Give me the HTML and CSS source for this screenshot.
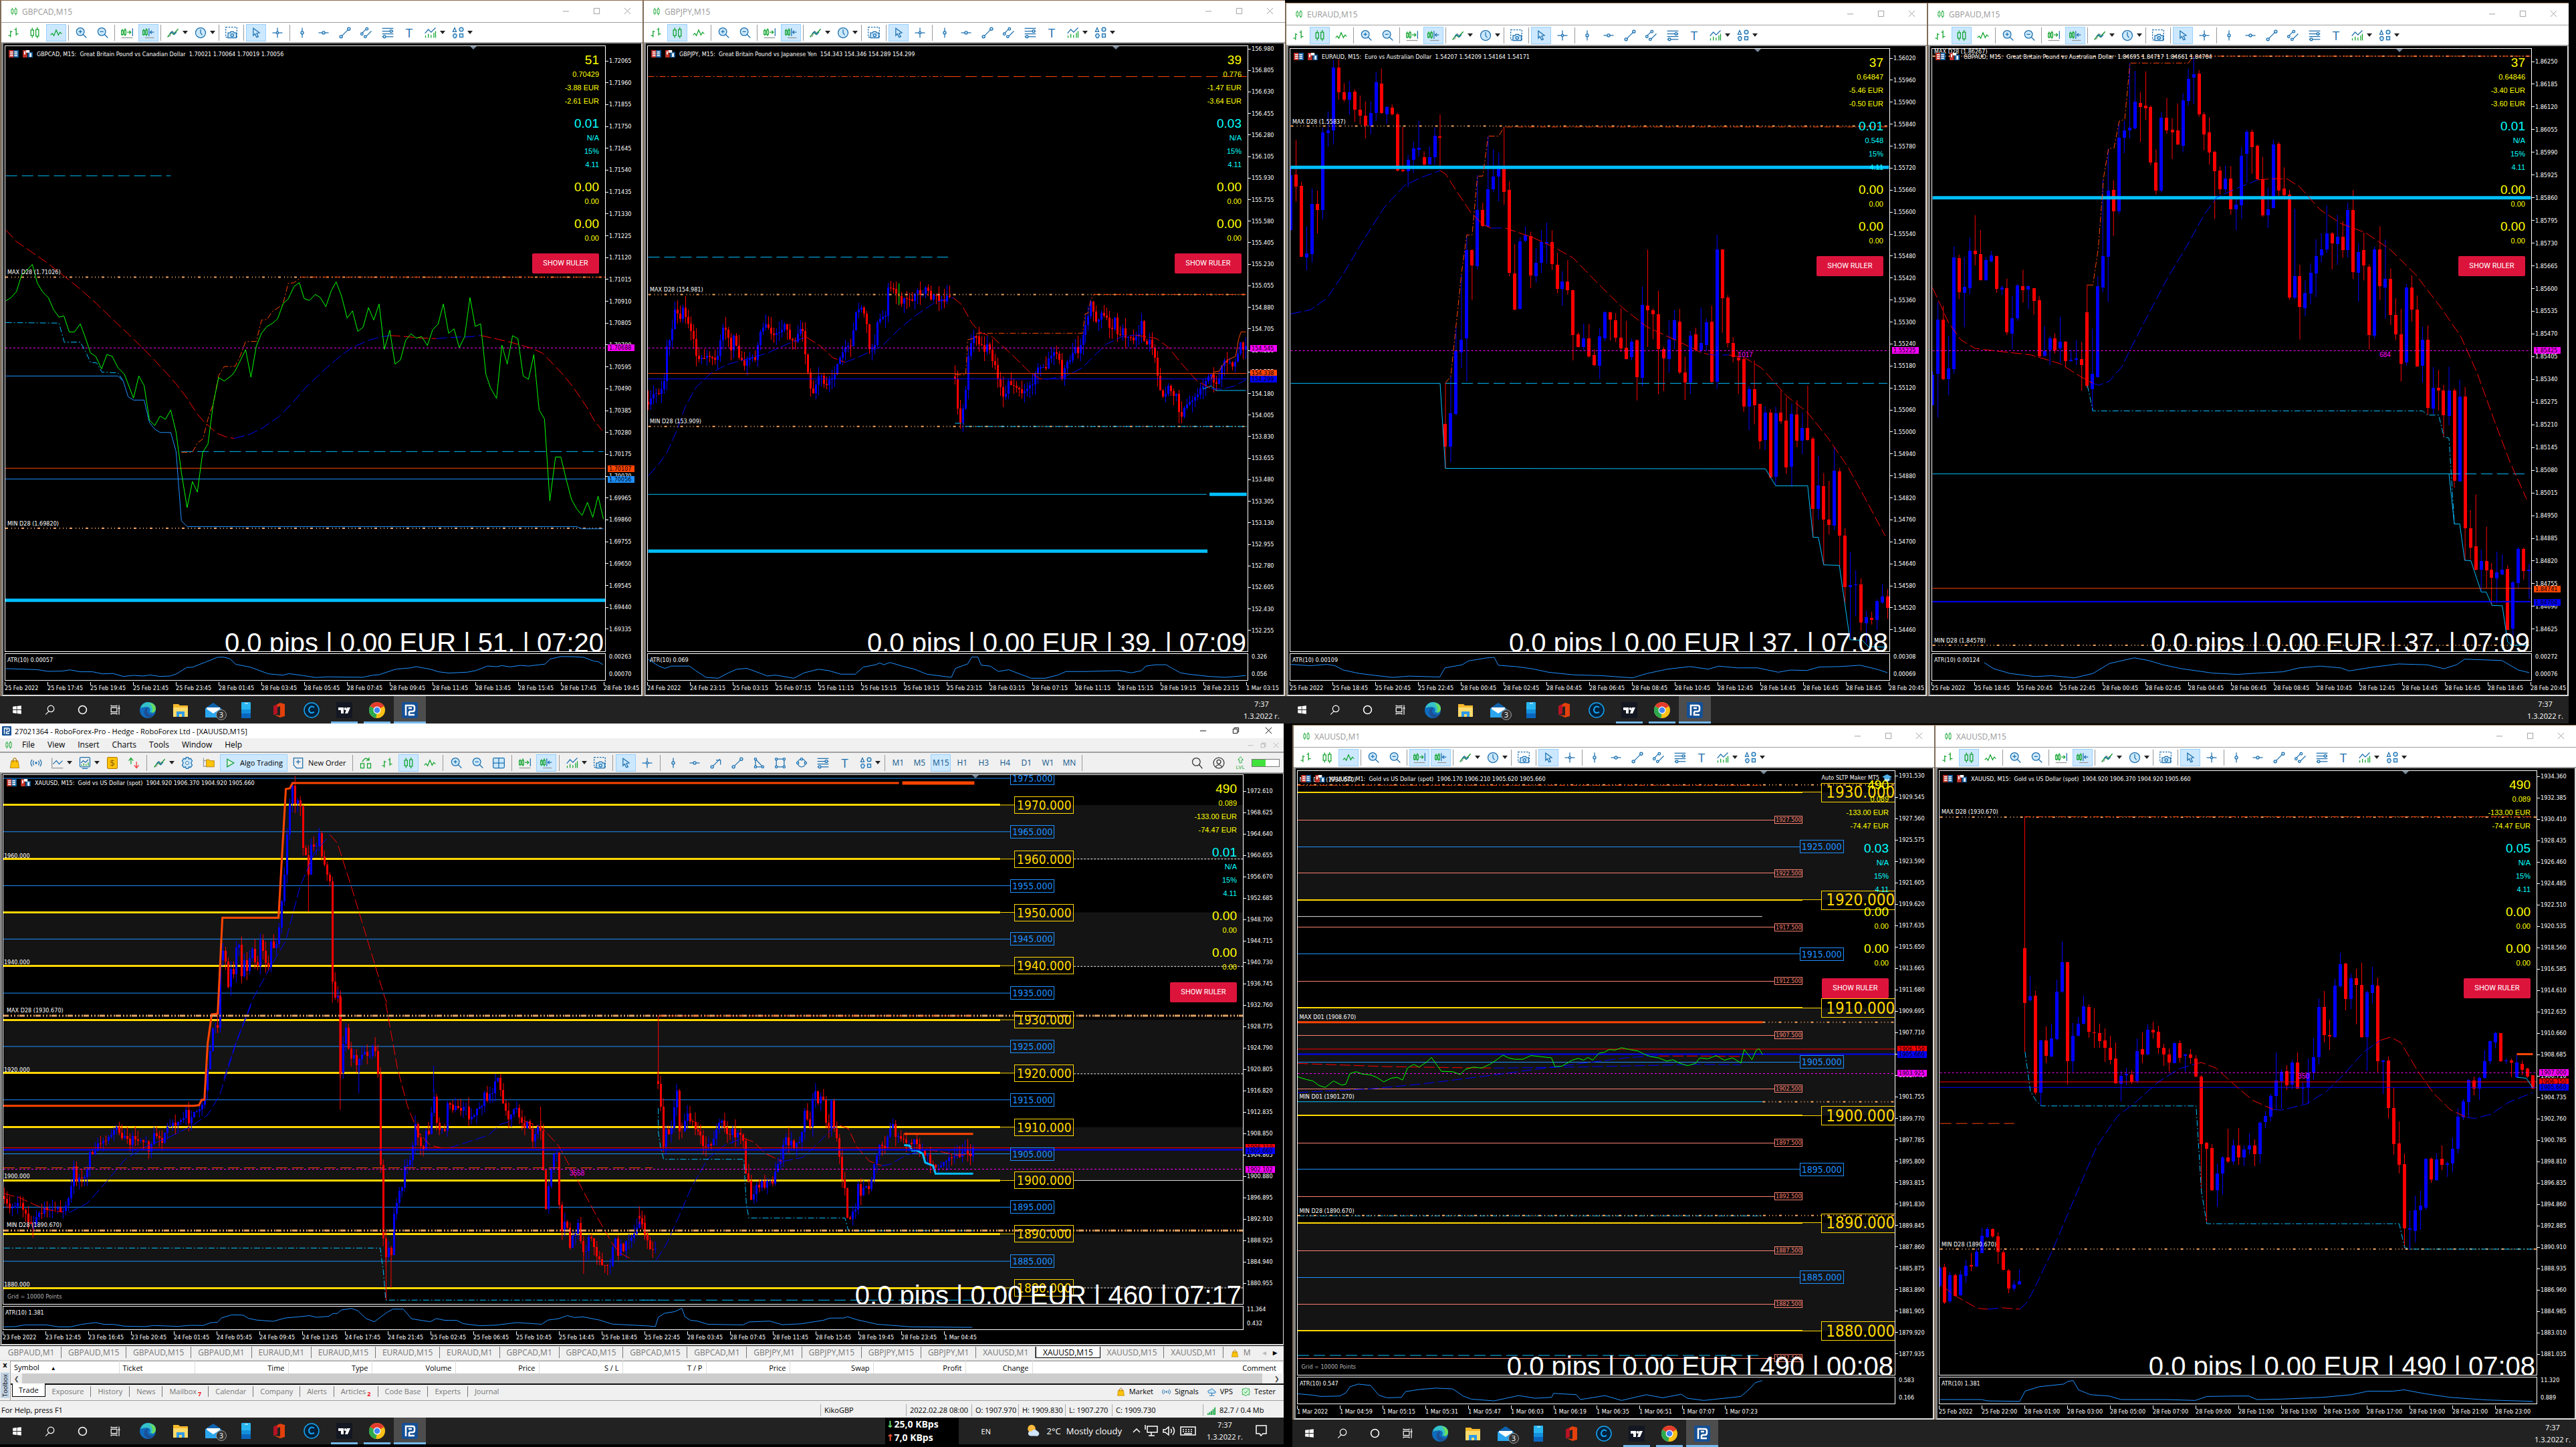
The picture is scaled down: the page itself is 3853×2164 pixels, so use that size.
FILE: index.html
```html
<!DOCTYPE html>
<html lang="en">
<head>
    <meta charset="UTF-8">
    <meta name="viewport" content="width=device-width, initial-scale=1.0">
    <title>Trading Desktop</title>
    <link rel="stylesheet" href="styles.css">
</head>
<body>
    <svg class="sprite" aria-hidden="true">
        <symbol id="i-bars" viewBox="0 0 24 24"><path class="g" d="M3 17h4M7 8v12M7 10h3M17 3v14M14 6h3M17 14h4"/></symbol>
        <symbol id="i-candles" viewBox="0 0 24 24"><path class="g" d="M5 7h5v10H5zM14 6h5v12h-5zM7.500 3v4M7.500 17v4M16.500 2v4M16.500 18v4"/></symbol>
        <symbol id="i-line" viewBox="0 0 24 24"><path class="g" d="M2 16l3-3 3 4 4-10 4 9 3-5 3 3"/></symbol>
        <symbol id="i-zoomin" viewBox="0 0 24 24"><circle class="bf" cx="11" cy="10" r="7"/><path class="b" d="M16 15l6 6M8 10h6M11 7v6"/></symbol>
        <symbol id="i-zoomout" viewBox="0 0 24 24"><circle class="bf" cx="11" cy="10" r="7"/><path class="b" d="M16 15l6 6M8 10h6"/></symbol>
        <symbol id="i-scroll" viewBox="0 0 24 24"><path class="g" d="M2 8h3v7H2zM7 7h3v8H7zM3.500 5v3M8.500 4v3M3.500 15v2M8.500 15v3M12 11h7M16 8l3 3-3 3"/><path class="b" d="M22 4v14"/><path class="n" d="M2 21h20"/></symbol>
        <symbol id="i-shift" viewBox="0 0 24 24"><path class="g" d="M2 8h3v7H2zM7 7h3v8H7zM3.500 5v3M8.500 4v3M3.500 15v2M8.500 15v3"/><path class="b" d="M13 4v14M22 11h-7M18 8l-3 3 3 3"/><path class="n" d="M6 21h16"/></symbol>
        <symbol id="i-ind" viewBox="0 0 24 24"><path class="n" d="M2 18h4l4-9 4 3 7-6"/><path class="g" d="M2 20l6-9 5 4 8-10"/><path class="b" d="M6 14l4-4 4 5 4-4"/></symbol>
        <symbol id="i-clock" viewBox="0 0 24 24"><circle class="bf" cx="12" cy="12" r="9"/><path class="b" d="M12 6v6l3 4"/></symbol>
        <symbol id="i-camera" viewBox="0 0 24 24"><path class="b dash" d="M2 2h20v18H2z"/><path class="bf" d="M6 12h4l1-2h5l1 2h4v9H6z"/><circle class="b" cx="13.500" cy="16.500" r="2.500"/></symbol>
        <symbol id="i-cursor" viewBox="0 0 24 24"><path class="bf" d="M7 4l11 8-5 1 3 6-3 1-3-6-3 3z"/></symbol>
        <symbol id="i-cross" viewBox="0 0 24 24"><path class="b" d="M12 3v18M3 12h18"/><circle class="bf" cx="12" cy="12" r="2"/></symbol>
        <symbol id="i-vline" viewBox="0 0 24 24"><path class="b" d="M12 3v18"/><circle class="bf" cx="12" cy="12" r="2.500"/></symbol>
        <symbol id="i-hline" viewBox="0 0 24 24"><path class="b" d="M3 12h18"/><circle class="bf" cx="12" cy="12" r="2.500"/></symbol>
        <symbol id="i-trend" viewBox="0 0 24 24"><path class="b" d="M5 19L19 5"/><circle class="bf" cx="5" cy="19" r="2.500"/><circle class="bf" cx="19" cy="5" r="2.500"/></symbol>
        <symbol id="i-arrow" viewBox="0 0 24 24"><path class="b" d="M5 19L19 5M12 7h8v8"/><circle class="bf" cx="5" cy="19" r="2.500"/></symbol>
        <symbol id="i-channel" viewBox="0 0 24 24"><path class="b" d="M3 14L12 5M10 20L21 9"/><circle class="bf" cx="4" cy="14" r="2.200"/><circle class="bf" cx="13" cy="5" r="2.200"/><circle class="bf" cx="10" cy="19" r="2.200"/></symbol>
        <symbol id="i-fib" viewBox="0 0 24 24"><path class="b" d="M2 4h20M2 9h20M2 14h20M2 19h20"/><circle class="bf" cx="18" cy="9" r="2.300"/><circle class="bf" cx="6" cy="19" r="2.300"/></symbol>
        <symbol id="i-chart" viewBox="0 0 24 24"><path class="b" d="M2 13l6-7 5 5 8-8"/><path class="g" d="M3 21v-4M8 21v-7M13 21v-5M18 21v-9M21 21V9"/></symbol>
        <symbol id="i-shapes" viewBox="0 0 24 24"><path class="b" d="M3 10l3-7 3 7z"/><circle class="bf" cx="18" cy="6" r="3.500"/><path class="bf" d="M3 17l2-3h3l2 3-2 4H5z"/><path class="bf" d="M15 14h6v6h-6z"/></symbol>
        <symbol id="i-tri" viewBox="0 0 24 24"><path class="b" d="M6 5v14h13z"/><circle class="bf" cx="6" cy="5" r="2"/><circle class="bf" cx="6" cy="19" r="2"/><circle class="bf" cx="19" cy="19" r="2"/></symbol>
        <symbol id="i-rect" viewBox="0 0 24 24"><path class="b" d="M5 5h14v14H5z"/><circle class="bf" cx="5" cy="5" r="2"/><circle class="bf" cx="19" cy="5" r="2"/><circle class="bf" cx="5" cy="19" r="2"/><circle class="bf" cx="19" cy="19" r="2"/></symbol>
        <symbol id="i-ellipse" viewBox="0 0 24 24"><circle class="b" cx="12" cy="12" r="7"/><circle class="bf" cx="12" cy="5" r="2"/><circle class="bf" cx="5" cy="12" r="2"/><circle class="bf" cx="19" cy="12" r="2"/></symbol>
        <symbol id="i-bag" viewBox="0 0 24 24"><path d="M6 8h12l2 13H4z" fill="#fcc30b" stroke="#b37a00"/><path d="M9 11V6q3-6 6 0v5" fill="none" stroke="#b37a00" stroke-width="1.500"/></symbol>
        <symbol id="i-signal" viewBox="0 0 24 24"><circle cx="12" cy="12" r="2" fill="#1c6fae"/><path class="b" d="M8 8q-3 4 0 8M16 8q3 4 0 8M5 6q-5 6 0 12M19 6q5 6 0 12"/></symbol>
        <symbol id="i-axes" viewBox="0 0 24 24"><path class="n" d="M2 3v18h20"/><path class="b" d="M4 14l6-6 5 6 6-6"/></symbol>
        <symbol id="i-panel" viewBox="0 0 24 24"><rect class="b" x="3" y="2" width="18" height="17" rx="2"/><path class="b" d="M5 12l4-4 4 3 5-5M7 22h10"/><path class="g" d="M6 17v-2M10 17v-4M14 17v-3M18 17v-6"/></symbol>
        <symbol id="i-swap" viewBox="0 0 24 24"><path class="g" d="M7 14V4M3 8l4-5 4 5"/><path d="M17 10v10M13 16l4 5 4-5" fill="none" stroke="#e33" stroke-width="1.500"/></symbol>
        <symbol id="i-gear" viewBox="0 0 24 24"><path class="bf" d="M10 2h4l1 3 3-1 3 4-2 4 2 4-3 4-3-1-1 3h-4l-1-3-3 1-3-4 2-4-2-4 3-4 3 1z"/><circle cx="12" cy="12" r="3" fill="#f0f0f0" stroke="#1c6fae"/></symbol>
        <symbol id="i-folder" viewBox="0 0 24 24"><path class="n" d="M3 3v15h6M3 8h6"/><path d="M8 6h5l1 2h8v11H8z" fill="#fcc30b" stroke="#b37a00"/></symbol>
        <symbol id="i-play" viewBox="0 0 24 24"><path d="M7 5l12 7-12 7z" fill="#dff5e3" stroke="#0f9d3a" stroke-width="1.500"/></symbol>
        <symbol id="i-order" viewBox="0 0 24 24"><path class="b" d="M4 3h16v18H9l-5-5zM8 10h8M12 6v8"/></symbol>
        <symbol id="i-refresh" viewBox="0 0 24 24"><path class="g" d="M3 13h6v8H3zM15 13h6v8h-6zM6 10q6-11 12-3M18 2v5h-5"/></symbol>
        <symbol id="i-grid" viewBox="0 0 24 24"><rect class="bf" x="2" y="3" width="20" height="18" rx="2"/><path class="b" d="M12 3v18M2 12h20"/></symbol>
        <symbol id="i-search" viewBox="0 0 24 24"><circle class="k" cx="10" cy="10" r="7"/><path class="k" d="M15 15l6 7"/></symbol>
        <symbol id="i-user" viewBox="0 0 24 24"><circle class="k" cx="12" cy="12" r="9.500"/><circle class="k" cx="12" cy="10" r="3.500"/><path class="k" d="M6 19q6-8 12 0"/></symbol>
        <symbol id="i-lvl" viewBox="0 0 24 24"><path class="g" d="M9 20v-8H5l7-9 7 9h-4v8z"/></symbol>
        <symbol id="i-cloud" viewBox="0 0 24 24"><path class="bf" d="M6 15q-4-1-3-5 2-3 5-2 3-6 8-1l1 2q5 1 4 5l-3 1z"/><path class="b" d="M12 15v6M6 21h12"/></symbol>
        <symbol id="i-check" viewBox="0 0 24 24"><path d="M12 2l3 3h5v5l2 2-2 2v5h-5l-3 3-3-3H4v-5l-2-2 2-2V5h5z" fill="#d7f7dd" stroke="#17a63c" stroke-width="1.500"/><path class="g" d="M8 12l3 3 5-6"/></symbol>
        <symbol id="i-robo" viewBox="0 0 24 24"><rect width="24" height="24" rx="2" fill="#155096"/><path d="M6 20V5h10q3 0 3 3v3q0 3-3 3h-5M10 9h5M11 14v5h8" fill="none" stroke="#fff" stroke-width="2.500"/></symbol>
        <symbol id="t-win" viewBox="0 0 24 24"><path d="M4 6l7-1v6.500H4zM12 5l8-1v7.500h-8zM4 12.500h7V19l-7-1zM12 12.500h8V20l-8-1z" fill="#fff"/></symbol>
        <symbol id="t-search" viewBox="0 0 24 24"><circle class="w" cx="14" cy="10" r="6"/><path class="w" d="M10 15l-6 6"/></symbol>
        <symbol id="t-ring" viewBox="0 0 24 24"><circle cx="12" cy="12" r="7.500" fill="none" stroke="#fff" stroke-width="2"/></symbol>
        <symbol id="t-view" viewBox="0 0 24 24"><path class="w" d="M4 8h11v8H4zM4 3v2h11V3M4 21v-2h11v2M19 3v18M17 9h4"/></symbol>
        <symbol id="t-edge" viewBox="0 0 24 24"><circle cx="12" cy="12" r="12" fill="#0f6cbd"/><path d="M1 9Q4 0 13 0q11 1 11 10-1 7-9 5 3-7-4-8-6 0-10 2z" fill="#35c1c8"/><path d="M14 1q10 2 10 9-1 6-6 6 4-8-4-15z" fill="#6bdc5a"/><path d="M7 13q1-5 6-4-5 5 1 9 4 2 8 0-4 6-10 5-7-3-5-10z" fill="#1c4f96"/></symbol>
        <symbol id="t-folder" viewBox="0 0 24 24"><path d="M1 3h8l2 2h12v17H1z" fill="#f7b92b"/><path d="M1 8h22v14H1z" fill="#fddb6c"/><path d="M6 22v-8h12v8h-4v-4h-4v4z" fill="#2f9ae6"/></symbol>
        <symbol id="t-mail" viewBox="0 0 24 24"><path d="M0 9l12-8 12 8v14H0z" fill="#0e63ae"/><path d="M2 8h20v9H2z" fill="#fff"/><path d="M0 9l12 8 12-8v14H0z" fill="#2aa5ee"/></symbol>
        <symbol id="t-phone" viewBox="0 0 24 24"><rect x="5" y="0" width="14" height="24" rx="1" fill="#29b6f0"/><path d="M5 11h14v6H5z" fill="#138fdc"/><path d="M5 17h14v7H5z" fill="#0a66bd"/><path d="M10 2h5" stroke="#fff"/></symbol>
        <symbol id="t-office" viewBox="0 0 24 24"><path d="M4 6l10-5 7 2v18l-7 2-9-4 9 1V6L9 8v9l-5 2z" fill="#e3400c"/><path d="M4 6l6-3v14l-6 2z" fill="#b81224"/></symbol>
        <symbol id="t-c" viewBox="0 0 24 24"><circle cx="12" cy="12" r="11" fill="#03203a" stroke="#16a3f2" stroke-width="1.500"/><path d="M16 8q-6-4-8 3 0 7 8 4" fill="none" stroke="#16a3f2" stroke-width="2"/></symbol>
        <symbol id="t-tv" viewBox="0 0 24 24"><path d="M0 0h24v24H0z" fill="#131722"/><path d="M3 8h8v9H7v-5H3zM16 8h5l-4 9h-4z" fill="#fff"/><circle cx="13.500" cy="10" r="2" fill="#fff"/></symbol>
        <symbol id="t-chrome" viewBox="0 0 24 24"><circle cx="12" cy="12" r="12" fill="#fbc116"/><path d="M12 12L1.500 6Q5 0 12 0q7 0 10.500 6z" fill="#e33b2e"/><path d="M12 12L1.500 6q-3.500 7 0 12 3 5 9 6z" fill="#2da94f"/><circle cx="12" cy="12" r="5.500" fill="#fff"/><circle cx="12" cy="12" r="4.300" fill="#4285f4"/></symbol>
        <symbol id="h-list" viewBox="0 0 16 12"><path d="M0 0h8v12H0z" fill="#c3342b"/><path d="M8 0h8v12H8z" fill="#1b64a5"/><path d="M2 3h5M2 6h5M2 9h5M9 3h5M9 6h5M9 9h5" stroke="#fff" stroke-width="1.500"/></symbol>
        <symbol id="h-tags" viewBox="0 0 16 12"><path d="M0 0h7v12H0z" fill="#c3342b"/><path d="M8 3h8v9H8z" fill="#1b64a5"/><path d="M2 2h2v5H2zM5 0h6v4H5zM11 5h3v6h-3z" fill="#fff"/></symbol>
        <symbol id="h-hat" viewBox="0 0 16 12"><path d="M0 4l8-4 8 4-8 4z" fill="#4fb0ea"/><path d="M4 6v4q4 3 8 0V6L8 8zM14 5v5" fill="#cfe9fa" stroke="#4fb0ea"/></symbol>
        <symbol id="s-min" viewBox="0 0 12 12"><path d="M1 6.500h10" stroke="currentColor"/></symbol>
        <symbol id="s-max" viewBox="0 0 12 12"><path d="M1.500 1.500h9v9h-9z" fill="none" stroke="currentColor"/></symbol>
        <symbol id="s-restore" viewBox="0 0 12 12"><path d="M1.500 3.500h7v7h-7zM3.500 3V1.500h7v7H9" fill="none" stroke="currentColor"/></symbol>
        <symbol id="s-close" viewBox="0 0 12 12"><path d="M1 1l10 10M11 1L1 11" stroke="currentColor"/></symbol>
    </svg>

    <main class="desktop">
        <section class="monitor">
            <div class="windows">
                <article class="window" data-chart="gbpcad"></article>
                <article class="window" data-chart="gbpjpy"></article>
            </div>
            <footer class="taskbar"><div class="clock"><span>7:37</span><span>1.3.2022 г.</span></div></footer>
        </section>
        <section class="monitor right-top">
            <div class="windows">
                <article class="window" data-chart="euraud"></article>
                <article class="window" data-chart="gbpaud"></article>
            </div>
            <footer class="taskbar"><div class="clock"><span>7:37</span><span>1.3.2022 г.</span></div></footer>
        </section>
        <section class="monitor left-bottom">
            <article class="terminal">
                <header class="titlebar dark">
                    <svg class="app-icon"><use href="#i-robo"/></svg>
                    <h1>27021364 - RoboForex-Pro - Hedge - RoboForex Ltd - [XAUUSD,M15]</h1>
                    <div class="win-buttons">
                        <button aria-label="Minimize"><svg><use href="#s-min"/></svg></button>
                        <button aria-label="Restore"><svg><use href="#s-restore"/></svg></button>
                        <button aria-label="Close"><svg><use href="#s-close"/></svg></button>
                    </div>
                </header>
                <nav class="menu">
                    <svg class="app-icon"><use href="#i-candles"/></svg>
                    <button>File</button><button>View</button><button>Insert</button><button>Charts</button><button>Tools</button><button>Window</button><button>Help</button>
                    <div class="child-buttons">
                        <button aria-label="Minimize chart"><svg><use href="#s-min"/></svg></button>
                        <button aria-label="Restore chart"><svg><use href="#s-restore"/></svg></button>
                        <button aria-label="Close chart"><svg><use href="#s-close"/></svg></button>
                    </div>
                </nav>
                <div class="toolbar main-tools" id="main-tools"></div>
                <div class="chart" data-plot="xauusd15"></div>
                <nav class="chart-tabs">
                    <button>GBPAUD,M1</button><button>GBPAUD,M15</button><button>GBPAUD,M15</button><button>GBPAUD,M1</button><button>EURAUD,M1</button><button>EURAUD,M15</button><button>EURAUD,M15</button><button>EURAUD,M1</button><button>GBPCAD,M1</button><button>GBPCAD,M15</button><button>GBPCAD,M15</button><button>GBPCAD,M1</button><button>GBPJPY,M1</button><button>GBPJPY,M15</button><button>GBPJPY,M15</button><button>GBPJPY,M1</button><button>XAUUSD,M1</button><button class="active">XAUUSD,M15</button><button>XAUUSD,M15</button><button>XAUUSD,M1</button>
                    <button class="market"><svg><use href="#i-bag"/></svg>M</button>
                    <span class="pager"><i>◂</i><b>▸</b></span>
                </nav>
                <section class="toolbox">
                    <div class="toolbox-side"><button aria-label="Close toolbox">x</button><span>Toolbox</span></div>
                    <div class="toolbox-body">
                        <table>
                            <colgroup><col class="w-l"><col class="w-m"><col class="w-time"><col class="w-n"><col class="w-n"><col class="w-n"><col class="w-n"><col class="w-n"><col class="w-n"><col class="w-n"><col class="w-profit"><col class="w-s"><col></colgroup>
                            <thead><tr><th class="start">Symbol <small>▲</small></th><th class="start">Ticket</th><th>Time</th><th>Type</th><th>Volume</th><th>Price</th><th>S / L</th><th>T / P</th><th>Price</th><th>Swap</th><th>Profit</th><th>Change</th><th>Comment</th></tr></thead>
                        </table>
                        <div class="scroll"><button aria-label="Scroll left">❮</button><div></div><button aria-label="Scroll right">❯</button></div>
                        <div class="box-tabs">
                            <button class="active">Trade</button><button>Exposure</button><button>History</button><button>News</button><button>Mailbox<sub>7</sub></button><button>Calendar</button><button>Company</button><button>Alerts</button><button>Articles<sub>2</sub></button><button>Code Base</button><button>Experts</button><button>Journal</button>
                            <div class="services">
                                <button><svg><use href="#i-bag"/></svg>Market</button>
                                <button><svg><use href="#i-signal"/></svg>Signals</button>
                                <button><svg><use href="#i-cloud"/></svg>VPS</button>
                                <button><svg><use href="#i-check"/></svg>Tester</button>
                            </div>
                        </div>
                    </div>
                </section>
                <div class="status">
                    <span class="help">For Help, press F1</span>
                    <span class="s-acc">KikoGBP</span><span class="s-time">2022.02.28 08:00</span><span>O: 1907.970</span><span>H: 1909.830</span><span>L: 1907.270</span><span>C: 1909.730</span><span class="s-gap"></span>
                    <span class="s-net"><svg viewBox="0 0 14 14"><path d="M1 14v-3M4 14v-5M7 14V7M10 14V4M13 14V1" stroke="#0ba53a" stroke-width="2"/></svg>82.7 / 0.4 Mb</span>
                </div>
            </article>
            <footer class="taskbar full">
                <div class="speed"><span><i class="rx">↓</i>25,0 KBps</span><span><i class="tx">↑</i>7,0 KBps</span></div>
                <span class="lang">EN</span>
                <svg class="weather" viewBox="0 0 24 24"><circle cx="9" cy="8" r="7" fill="#f9b93a"/><path d="M7 21q-5-1-4-6 2-4 6-2 4-7 10-1 5 3 3 7-2 3-5 2z" fill="#cfe4fa"/></svg>
                <span class="temp">2°C</span><span class="sky">Mostly cloudy</span>
                <svg class="tray" viewBox="0 0 110 20"><path class="w" d="M3 12l5-5 5 5M24 3h15v9H24zM30 12v5M26 17h9M21 1v7M48 8h3l5-4v12l-5-4h-3zM59 7q3 3 0 6M62 4q5 6 0 12M74 4h22v12H74zM77 8h2M81 8h2M85 8h2M89 8h2M77 11h2M81 11h2M85 11h2M89 11h2M79 14h12"/></svg>
                <div class="clock"><span>7:37</span><span>1.3.2022 г.</span></div>
                <svg class="notify" viewBox="0 0 18 18"><path class="w" d="M1 1h15v12H11l-3 3-2-3H1z"/></svg>
            </footer>
        </section>
        <section class="monitor right-bottom">
            <div class="windows">
                <article class="window" data-chart="xauusd1"></article>
                <article class="window" data-chart="xauusd15b"></article>
            </div>
            <footer class="taskbar"><div class="clock"><span>7:37</span><span>1.3.2022 г.</span></div></footer>
        </section>
    </main>

    <script src="data.js"></script>
    <script src="app.js"></script>
</body>
</html>
```
FILE: styles.css
```css
* {
    box-sizing: border-box;
}
body {
    margin: 0;
    background: #000;
    color: #000;
    font-family: "Open Sans", "Noto Sans", sans-serif;
    font-size: 11px;
}
button {
    margin: 0;
    padding: 0;
    border: 0;
    background: none;
    color: inherit;
    font: inherit;
    white-space: nowrap;
}
.sprite {
    position: absolute;
    width: 0;
    height: 0;
}
.g, .b, .n, .k, .w {
    fill: none;
    stroke-width: 1.5;
}
.g { stroke: #0fa32c; }
.b { stroke: #1c6fae; }
.n { stroke: #999; }
.k { stroke: #333; }
.w { stroke: #fff; }
.bf {
    fill: #cbe8fb;
    stroke: #1c6fae;
    stroke-width: 1.5;
}
.dash {
    stroke-dasharray: 3 2;
}

/* monitors */
.desktop {
    display: grid;
    grid-template-columns: 1922fr 1931fr;
    grid-template-rows: minmax(0, 1fr) minmax(0, 1fr);
    height: 100vh;
    min-width: 1600px;
}
.monitor {
    display: flex;
    flex-direction: column;
    min-width: 0;
    min-height: 0;
}
.right-top {
    padding: 4px 11px 0 0;
}
.left-bottom {
    padding: 0 2px 4px 0;
}
.right-bottom {
    padding: 2px 0 0 11px;
}
.windows {
    flex: 1;
    display: grid;
    grid-template-columns: minmax(0, 1fr) minmax(0, 1fr);
    min-height: 0;
}
.window {
    display: flex;
    flex-direction: column;
    min-width: 0;
    min-height: 0;
    background: #fff;
    border-top: 1px solid #8d6c48;
    border-left: 2px solid #806c58;
}

/* title bars */
.titlebar {
    display: flex;
    align-items: center;
    height: 33px;
    background: #fff;
    color: #999;
    border-bottom: 1px solid #a0a0a0;
}
.titlebar h1, .titlebar h2 {
    margin: 0;
    font-size: 12px;
    font-weight: 400;
    flex: 1;
}
.app-icon {
    width: 14px;
    height: 14px;
    margin: 0 5px 0 12px;
}
.win-buttons button {
    width: 46px;
    height: 30px;
}
.win-buttons svg {
    width: 11px;
    height: 11px;
}
.titlebar.dark {
    height: 22px;
    color: #000;
    border-bottom: 0;
}
.dark .app-icon {
    margin: 0 5px 0 3px;
}
.dark .win-buttons button {
    height: 20px;
}
.dark h1 {
    font-size: 11px;
}

/* toolbars */
.toolbar {
    display: flex;
    align-items: center;
    gap: 2px;
    height: 31px;
    padding-left: 3px;
    background: #fff;
    border-bottom: 2px solid #a0a0a0;
}
.tool {
    display: flex;
    align-items: center;
    justify-content: center;
    width: 30px;
    height: 26px;
}
.tool svg {
    width: 20px;
    height: 20px;
}
.tool.drop {
    width: 39px;
    justify-content: flex-start;
    padding-left: 5px;
    gap: 4px;
}
.tool.drop::after {
    content: "";
    border: 4px solid transparent;
    border-top: 5px solid #222;
    border-bottom: 0;
}
.tool.active {
    background: #cce8ff;
    border: 1px solid #99d1ff;
}
.tool.text {
    width: auto;
    padding: 0 6px 0 4px;
    gap: 5px;
    font-size: 11px;
}
.letter {
    color: #1c6fae;
    font-size: 19px;
    line-height: 20px;
}
.sep {
    width: 1px;
    height: 24px;
    margin: 0 1px;
    background: #999;
}
.main-tools .sep {
    margin: 0 2px;
}
.tool.period {
    color: #14578a;
    font-size: 12px;
}
.coin {
    width: 16px;
    height: 18px;
    border-radius: 2px;
    border: 1px solid #b37a00;
    background: #fcc30b;
    color: #905c00;
    font-size: 13px;
    line-height: 16px;
    text-align: center;
}
.lvl {
    flex-direction: column;
    color: #0fa32c;
    font-size: 8px;
    line-height: 8px;
}
.tool.lvl svg {
    width: 13px;
    height: 13px;
}
.push {
    margin-left: auto;
}
.battery {
    width: 42px;
    height: 12px;
    margin: 0 6px 0 0;
    border: 1px solid #777;
    background: linear-gradient(90deg, #41e23c 50%, #fff 50%);
}

/* charts */
.chart {
    flex: 1;
    min-height: 0;
    display: grid;
    grid-template-columns: minmax(0, 1fr) 53px;
    grid-template-rows: minmax(0, 1fr) 41px 19px;
    row-gap: 2px;
    padding: 3px 0 0 2px;
    background: #000;
    border: solid #ddd;
    border-width: 0 2px 2px 0;
    border-left: 3px solid #888;
    color: #fff;
    font-family: "DejaVu Sans Condensed", "DejaVu Sans", sans-serif;
    font-size: 9px;
    line-height: 10px;
    overflow: hidden;
}
.chart.wide {
    grid-template-columns: minmax(0, 1fr) 56px;
}
.plot, .atr {
    position: relative;
    overflow: hidden;
    border: 1px solid #fff;
}
.plot > svg, .atr > svg {
    position: absolute;
    top: 0;
    left: 0;
    width: 100%;
    height: 100%;
}
.atr span {
    position: absolute;
    left: 3px;
    top: 4px;
}
.price-axis, .atr-axis {
    display: flex;
    flex-direction: column;
    justify-content: space-between;
    position: relative;
}
.atr-axis {
    padding: 0 0 5px 5px;
}
.price-axis > span {
    display: flex;
    align-items: center;
    gap: 1px;
}
.price-axis > span::before {
    content: "";
    width: 4px;
    height: 1px;
    background: #fff;
}
.price-tag {
    position: absolute;
    left: 3px;
    width: 40px;
    height: 10px;
    margin-top: -5px;
    padding-left: 2px;
    color: #000;
}
.wide .price-tag {
    width: 44px;
}
.time-axis {
    grid-column: 1 / -1;
    display: flex;
    overflow: hidden;
}
.time-axis span {
    flex: none;
    width: 64px;
    padding-top: 4px;
    white-space: nowrap;
    background: linear-gradient(#fff, #fff) 0 0 / 1px 5px no-repeat;
}
.chart-head {
    position: absolute;
    left: 5px;
    top: 6px;
    display: flex;
    align-items: center;
    gap: 6px;
    white-space: pre;
}
.chart-head svg, .expert svg {
    width: 15px;
    height: 11px;
}
.expert {
    position: absolute;
    right: 4px;
    top: 5px;
    display: flex;
    gap: 4px;
}
.shift-mark {
    position: absolute;
    top: 0;
    margin-left: -5px;
    border: 5px solid transparent;
    border-top-color: #778899;
    border-bottom: 0;
}
.note {
    position: absolute;
    margin-top: -5px;
    white-space: nowrap;
}
.note.dim {
    color: #b0b0b0;
}
.note.count {
    color: #ff00ff;
    font-family: "Liberation Sans", Arial, sans-serif;
    font-size: 10px;
}
.tag {
    position: absolute;
    display: flex;
    align-items: center;
    justify-content: center;
    border: 1px solid;
}
.tag.gold {
    width: 89px;
    height: 26px;
    margin-top: -13px;
    color: #ffd700;
    font-size: 19px;
}
.tag.gold.big {
    width: 118px;
    height: 29px;
    margin-top: -14px;
    font-size: 24px;
}
.tag.blue {
    width: 66px;
    height: 20px;
    margin-top: -10px;
    color: #1e90ff;
    font-size: 14px;
}
.tag.pink {
    width: 42px;
    height: 12px;
    margin-top: -6px;
    color: #fa8072;
}
.info {
    position: absolute;
    right: 9px;
    top: 10px;
    display: flex;
    flex-direction: column;
    align-items: flex-end;
    gap: 13px;
    font-family: "Liberation Sans", Arial, sans-serif;
    font-size: 11px;
    line-height: 20px;
    color: #ff0;
    text-align: right;
}
.info div.lots {
    color: #00ffff;
}
.info b {
    display: block;
    font-size: 19px;
    font-weight: 400;
    line-height: 22px;
}
.info span {
    display: block;
}
.ruler {
    width: 100px;
    height: 30px;
    border-radius: 2px;
    background: #dc143c;
    color: #fff;
    font-family: Roboto, sans-serif;
    font-size: 11px;
}
.ticker {
    position: absolute;
    right: 2px;
    bottom: 0;
    height: 33px;
    overflow: hidden;
    font-family: "Liberation Sans", Arial, sans-serif;
    font-size: 40px;
    line-height: 40px;
    white-space: nowrap;
}

/* chart strokes */
.plot svg *, .atr svg * {
    fill: none;
    vector-effect: non-scaling-stroke;
}
.plot svg .band { fill: #141414; }
.crisp { shape-rendering: crispEdges; }
.up { stroke: #0000ff; }
.down { stroke: #ff0000; }
.w5 { stroke-width: 5px; }
.w3 { stroke-width: 3px; }
.quote { stroke: #00ff00; }
.ma-up { stroke: #0000ff; stroke-dasharray: 16 5; }
.ma-down { stroke: #ff0000; stroke-dasharray: 16 5; }
.peak { stroke: #ff4500; stroke-dasharray: 9 3 2 3; }
.peak-line { stroke: #ff4500; }
.peak-thick { stroke: #ff4500; stroke-width: 3px; }
.peak-fat { stroke: #ff4500; stroke-width: 5px; }
.peak-dash { stroke: #ff4500; stroke-dasharray: 17 7; }
.floor { stroke: #00bfff; stroke-dasharray: 9 3 2 3; }
.floor-line { stroke: #00bfff; }
.floor-thick { stroke: #00bfff; stroke-width: 3px; }
.floor-fat { stroke: #00bfff; stroke-width: 5px; }
.floor-dash { stroke: #00bfff; stroke-dasharray: 17 7; }
.dodger { stroke: #1e90ff; }
.range { stroke: #f4a460; stroke-width: 2px; stroke-dasharray: 4 5 1 4 1 4 1 4; }
.range-fat { stroke: #e0a060; stroke-width: 3px; stroke-dasharray: 8 3 2 3 2 3 2 1; }
.target { stroke: #ff00ff; stroke-dasharray: 3 3; }
.bid { stroke: #0000ff; }
.bid-thick { stroke: #0000ff; stroke-width: 2px; }
.ask { stroke: #ff4500; }
.ask-red { stroke: #ff0000; }
.gold-line { stroke: #ffd700; stroke-width: 3px; }
.gold-mid { stroke: #ffd700; stroke-width: 2px; }
.gold-thin { stroke: #ffd700; }
.pink-line { stroke: #fa8072; }
.white-line { stroke: #ddd; }
.white-dash { stroke: #fff; stroke-dasharray: 3 2; }
.bg-magenta { background: #ff00ff; }
.bg-orange { background: #ff4500; }
.bg-dodger { background: #1e90ff; }
.bg-blue { background: #0000ff; }
.bg-red { background: #ff0000; }

/* terminal window */
.terminal {
    flex: 1;
    display: flex;
    flex-direction: column;
    min-height: 0;
    background: #f0f0f0;
}
.menu {
    display: flex;
    align-items: center;
    height: 20px;
}
.menu .app-icon {
    margin: 0 4px 0 6px;
}
.menu > button {
    padding: 0 10px 0 9px;
    font-size: 12px;
    line-height: 20px;
}
.child-buttons {
    margin-left: auto;
    padding-right: 4px;
    color: #aaa;
}
.child-buttons button {
    width: 16px;
}
.child-buttons svg {
    width: 9px;
    height: 9px;
}
.main-tools {
    height: 33px;
    padding-left: 7px;
    background: #f0f0f0;
    border-top: 2px solid #a0a0a0;
}
.terminal .chart {
    grid-template-columns: minmax(0, 1fr) 59px;
    grid-template-rows: minmax(0, 1fr) 36px 19px;
    padding: 1px 0 0 1px;
    border-right-width: 1px;
}
.chart-tabs {
    display: flex;
    height: 23px;
    padding: 1px 0 3px 2px;
    border-top: 1px solid #000;
    border-bottom: 1px solid #ccc;
    color: #777;
    font-size: 12px;
    overflow: hidden;
}
.chart-tabs button {
    flex: 1 1 auto;
    position: relative;
    line-height: 17px;
    border-right: 1px solid #777;
}
.chart-tabs .active {
    background: #fff;
    color: #000;
    border: 1px solid #000;
    border-top: 0;
}
.chart-tabs .market {
    flex: none;
    width: 50px;
    border-right: 0;
}
.market svg {
    width: 14px;
    height: 14px;
    margin-right: 6px;
    vertical-align: middle;
}
.pager {
    display: flex;
    align-items: center;
    gap: 10px;
    padding: 0 10px 0 8px;
}
.pager i {
    color: #bbb;
    font-style: normal;
}
.pager b {
    color: #000;
}
.toolbox {
    display: flex;
    height: 60px;
    margin-bottom: 3px;
    border-bottom: 1px solid #a0a0a0;
}
.toolbox-side {
    display: flex;
    flex-direction: column;
    justify-content: space-between;
    align-items: center;
    width: 15px;
    padding-bottom: 3px;
}
.toolbox-side button {
    font-size: 11px;
    font-weight: 700;
    line-height: 12px;
}
.toolbox-side span {
    padding: 2px 0;
    background: #bfd1e2;
    font-size: 9px;
    line-height: 13px;
    writing-mode: vertical-rl;
    transform: rotate(180deg);
}
.toolbox-body {
    flex: 1;
    min-width: 0;
    border-left: 1px solid #a0a0a0;
}
.toolbox table {
    width: 100%;
    table-layout: fixed;
    border-collapse: collapse;
    background: #fff;
    border-top: 1px solid #a0a0a0;
}
.toolbox th {
    height: 18px;
    padding: 0 5px;
    border-right: 1px solid #ddd;
    font-weight: 400;
    line-height: 17px;
    text-align: right;
    white-space: nowrap;
}
.toolbox th:last-child {
    padding-right: 10px;
}
.toolbox th.start {
    text-align: left;
}
.toolbox th small {
    margin-left: 14px;
    font-size: 8px;
}
.w-l { width: 162px; }
.w-m { width: 113px; }
.w-time { width: 140px; }
.w-n { width: 125px; }
.w-profit { width: 138px; }
.w-s { width: 100px; }
.scroll {
    display: flex;
    height: 15px;
    background: #f0f0f0;
}
.scroll div {
    flex: 1;
    background: #cdcdcd;
}
.scroll button {
    width: 17px;
    color: #444;
    font-size: 9px;
}
.scroll button:last-child {
    width: 32px;
    text-align: right;
    padding-right: 6px;
}
.box-tabs {
    display: flex;
    align-items: flex-start;
    height: 24px;
    border-top: 2px solid #111;
    color: #777;
}
.box-tabs > button {
    margin-top: 2px;
    padding: 0 10px;
    line-height: 16px;
    border-right: 1px solid #777;
}
.box-tabs > .active {
    margin: -2px 0 0 2px;
    padding: 0 9px;
    line-height: 19px;
    background: #fff;
    color: #000;
    border: 1px solid #000;
    border-top: 0;
}
.box-tabs > button:nth-child(12) {
    border-right: 0;
}
.box-tabs sub {
    margin-left: 2px;
    color: #e11;
    font-size: 9px;
    font-weight: 700;
    line-height: 8px;
}
.services {
    display: flex;
    gap: 12px;
    margin-left: auto;
    padding-right: 12px;
    color: #000;
    line-height: 20px;
}
.services button {
    display: flex;
    align-items: center;
    gap: 5px;
}
.services svg {
    width: 15px;
    height: 15px;
}
.status {
    display: flex;
    align-items: center;
    height: 22px;
    padding-left: 2px;
    line-height: 18px;
}
.status span {
    width: 70px;
    padding-left: 5px;
    border-left: 1px solid #aaa;
    white-space: nowrap;
}
.status .help {
    flex: 1;
    padding-left: 0;
    border-left: 0;
}
.status .s-acc { width: 128px; }
.status .s-time { width: 98px; }
.status .s-gap { width: 66px; }
.status .s-net { width: 121px; }
.s-net svg {
    width: 14px;
    height: 12px;
    margin-right: 5px;
    vertical-align: middle;
}

/* taskbar */
.taskbar {
    display: flex;
    align-items: center;
    height: 41px;
    padding-left: 1px;
    background: #222;
    color: #fff;
}
.taskbar.full {
    height: 40px;
}
.taskbar nav {
    display: flex;
    gap: 1px;
    flex: 1;
    height: 100%;
}
.task {
    position: relative;
    display: flex;
    align-items: center;
    justify-content: center;
    width: 48px;
}
.task svg {
    width: 24px;
    height: 24px;
}
.task.thin svg {
    width: 19px;
    height: 19px;
}
.task.open {
    border-bottom: 3px solid #76b9ed;
    padding-top: 3px;
    margin: 0 4px;
    width: 40px;
}
.task.open.current {
    margin: 0;
    width: 48px;
    background: #4d4d4d;
}
.badge {
    position: absolute;
    right: 4px;
    bottom: 5px;
    width: 16px;
    height: 16px;
    border: 1px solid #999;
    border-radius: 8px;
    background: #333;
    font-size: 11px;
    line-height: 14px;
    text-align: center;
}
.clock {
    display: flex;
    flex-direction: column;
    width: 70px;
    font-size: 11px;
    line-height: 18px;
    text-align: center;
}
.speed {
    display: flex;
    flex-direction: column;
    width: 110px;
    height: 100%;
    margin-right: 34px;
    padding-left: 2px;
    background: #000;
    font-size: 14px;
    font-weight: 700;
    line-height: 19px;
}
.speed i {
    display: inline-block;
    width: 12px;
    font-family: "DejaVu Sans", sans-serif;
    font-style: normal;
}
.rx { color: #6fe36f; }
.tx { color: #ff5a36; }
.lang {
    width: 66px;
}
.weather {
    width: 23px;
    height: 20px;
    margin-right: 9px;
}
.temp, .sky {
    font-size: 13px;
}
.temp {
    margin-right: 8px;
}
.tray {
    width: 110px;
    height: 20px;
    margin-left: 14px;
}
.full .clock {
    width: 60px;
}
.notify {
    width: 18px;
    height: 18px;
    margin: 0 24px 0 16px;
}
```
FILE: data.js
```js
// Chart data. Points are in the units of each chart's view box.
const charts = {
    gbpcad: {
        title: 'GBPCAD,M15', active: ['line', 'shift', 'cursor'], shift: 78,
        head: 'GBPCAD, M15:  Great Britain Pound vs Canadian Dollar  1.70021 1.70064 1.70019 1.70056',
        view: [12, 191, 1465, 2539], axis: [1.72065, 0.00105, 27, 5, 18, 29],
        info: [['51', '0.70429', '-3.88 EUR', '-2.61 EUR'], ['0.01', 'N/A', '15%', '4.11']],
        ticker: '0.0 pips | 0.00 EUR | 51. | 07:20',
        times: '25 Feb 2022|25 Feb 17:45|25 Feb 19:45|25 Feb 21:45|25 Feb 23:45|28 Feb 01:45|28 Feb 03:45|28 Feb 05:45|28 Feb 07:45|28 Feb 09:45|28 Feb 11:45|28 Feb 13:45|28 Feb 15:45|28 Feb 17:45|28 Feb 19:45',
        lines: [
            ['floor-dash', '13,735 416,735'], ['floor-dash', '442,1892 1473,1892'],
            ['ask', '12,1962 1477,1962'], ['dodger', '12,2007 1477,2007'], ['target', '12,1457 1477,1457'],
            ['range', '12,1160 1477,1160'], ['range', '12,2214 1477,2214'], ['floor-fat', '12,2516 1477,2516'],
            ['peak', '442,1895 469,1895 481,1857 495,1838 507,1755 520,1690 533,1573 547,1535 573,1535 586,1490 599,1430 625,1430 638,1340 651,1338 664,1305 690,1275 703,1186 717,1184 735,1160 1477,1160'],
            ['floor', '13,1351 143,1353 156,1433 195,1433 208,1472 220,1518 235,1520 248,1559 287,1562 300,1596'],
            ['dodger', '13,1575 287,1575 300,1596 312,1662 325,1676 351,1676 364,1770 377,1798 390,1812 416,1812 429,1891 442,2182 456,2207 1408,2207 1421,2216 1473,2216'],
            ['ma-down', '13,962 40,1012 78,1057 110,1095 155,1155 195,1210 235,1272 273,1335 310,1395 355,1470 407,1565 430,1610 455,1666 480,1732 495,1763 520,1802 530,1816 550,1830 571,1837'],
            ['ma-up', '571,1837 610,1819 640,1793 680,1746 715,1685 745,1624 780,1568 800,1535 835,1485 860,1455 900,1425 925,1413 951,1405'],
            ['ma-down', '951,1405 980,1408 1030,1416 1065,1418'], ['ma-up', '1065,1418 1100,1413 1150,1410 1173,1405'],
            ['ma-down', '1173,1405 1200,1415 1250,1435 1300,1460 1325,1480 1350,1525 1375,1570 1400,1624 1430,1699 1450,1760 1470,1804'],
            ['quote', '13,1260 26,1246 39,1221 52,1150 65,1130 78,1107 90,1185 103,1222 117,1246 130,1297 143,1328 155,1323 168,1390 181,1390 195,1356 208,1417 220,1478 233,1493 247,1545 260,1485 273,1492 287,1540 303,1568 325,1668 338,1575 351,1615 364,1760 377,1783 390,1743 403,1757 416,1718 429,1810 442,1980 456,2127 469,2018 481,2062 494,1896 507,1860 520,1690 533,1582 547,1596 566,1571 573,1555 599,1465 612,1580 625,1450 638,1395 651,1367 664,1355 677,1335 691,1270 703,1252 717,1200 730,1183 742,1250 755,1258 769,1233 781,1245 795,1284 808,1218 820,1180 833,1238 847,1332 860,1302 873,1388 886,1370 899,1288 912,1340 925,1273 938,1463 951,1383 964,1525 977,1508 990,1425 1003,1398 1016,1416 1029,1410 1043,1447 1056,1380 1069,1358 1082,1273 1095,1396 1108,1377 1121,1456 1134,1410 1147,1246 1160,1367 1173,1356 1186,1568 1197,1624 1212,1669 1225,1445 1238,1525 1251,1406 1264,1418 1277,1575 1290,1589 1303,1485 1316,1718 1329,1755 1342,2099 1356,1915 1369,1915 1382,2008 1395,2093 1408,2133 1421,2160 1434,2105 1447,2168 1460,2079 1473,2175']
        ],
        notes: [[17, 1138, 'MAX D28 (1.71026)'], [17, 2194, 'MIN D28 (1.69820)']],
        tags: [[1457, '1.70688', 'bg-magenta'], [1962, '1.70107', 'bg-orange'], [2007, '1.70056', 'bg-dodger']],
        atr: ['ATR(10) 0.00057', '0.00263', '0.00070', [12, 1246, 1465, 123], '13,1315 90,1320 115,1328 150,1327 170,1321 195,1330 225,1330 250,1340 275,1338 300,1352 325,1347 350,1350 365,1345 390,1352 415,1350 430,1340 455,1310 470,1308 500,1285 530,1262 545,1261 560,1268 575,1295 610,1308 655,1340 690,1346 705,1339 740,1348 770,1357 800,1354 885,1356 910,1346 925,1344 965,1318 1000,1312 1016,1306 1050,1318 1070,1330 1095,1336 1140,1332 1160,1325 1190,1303 1212,1306 1225,1301 1245,1307 1270,1300 1290,1303 1330,1294 1343,1270 1370,1258 1400,1259 1425,1262 1450,1280 1460,1282 1472,1296']
    },

    gbpjpy: {
        title: 'GBPJPY,M15', active: ['candles', 'shift', 'cursor'], shift: 78,
        head: 'GBPJPY, M15:  Great Britain Pound vs Japanese Yen  154.343 154.346 154.289 154.299',
        view: [8, 100, 1466, 1311], axis: [156.98, 0.175, 28, 3, 0, 27],
        info: [['39', '0.776', '-1.47 EUR', '-3.64 EUR'], ['0.03', 'N/A', '15%', '4.11']],
        ticker: '0.0 pips | 0.00 EUR | 39. | 07:09',
        times: '24 Feb 2022|24 Feb 23:15|25 Feb 03:15|25 Feb 07:15|25 Feb 11:15|25 Feb 15:15|25 Feb 19:15|25 Feb 23:15|28 Feb 03:15|28 Feb 07:15|28 Feb 11:15|28 Feb 15:15|28 Feb 19:15|28 Feb 23:15|1 Mar 03:15',
        body: 'w3', step: 6.52, wick: 24,
        walks: [
            '9:870 22:850 35:855 48:825 55:745 66:740 70:665 79:672 88:690 95:665 107:700 118:725 127:768 138:780 150:768 165:780 178:772 190:712 200:708 210:765 217:730 230:768 243:790 256:775 270:778 283:722 296:698 305:712 318:728 330:712 342:706 355:735 366:748 378:706 390:720 395:780 405:842 415:850 428:806 440:838 452:825 465:810 478:780 490:750 504:752 516:685 523:670 532:670 543:700 550:762 562:750 570:700 580:686 590:684 596:622 608:625 620:640 628:660 640:645 655:650 668:632 680:640 690:622 700:650 710:640 722:652 733:648 742:628 752:655',
            '759:815 765:880 772:912 780:880 786:840 792:762 798:740 806:725 815:740 824:745 832:760 840:735 845:770 855:782 865:825 873:845 880:862 888:828 898:832 908:840 918:850 930:845 940:838 950:825 960:798 970:800 980:795 990:768 1000:765 1010:765 1020:820 1030:790 1040:780 1050:745 1060:760 1070:735 1078:700 1085:680 1092:655 1098:680 1108:705 1118:680 1130:682 1140:720 1150:692 1158:732 1170:712 1180:735 1195:735 1208:725 1215:690 1224:760 1235:735 1245:760 1252:800 1260:840 1268:865 1280:838 1292:862 1302:858 1308:905 1318:890 1330:870 1340:868 1350:858 1360:840 1372:828 1382:812 1390:825 1400:832 1410:800 1420:780 1430:785 1438:800 1448:775 1456:745 1462:765 1470:745'
        ],
        lines: [
            ['peak', '9,166 745,166'], ['peak-dash', '745,166 1472,166'], ['floor-dash', '9,557 742,557'],
            ['range', '9,638 1472,638'], ['range', '9,924 1472,924'], ['target', '9,754 1472,754'],
            ['ask', '9,809 1472,809'], ['bid', '9,821 1472,821'],
            ['floor-line', '9,1071 1374,1071'], ['floor-fat', '1381,1071 1472,1071'], ['floor-fat', '9,1194 1376,1194'],
            ['peak', '759,812 785,812 790,736 806,733 813,722 1071,722 1077,680 1084,678 1091,650 1098,638 1472,638'],
            ['floor', '759,917 779,917 785,924 1472,924'],
            ['peak-line', '1385,822 1392,806 1405,804 1412,792 1425,780 1445,772 1452,735 1458,719 1470,719'],
            ['floor-line', '1365,843 1385,836 1397,846 1470,846'],
            ['ma-up', '10,1030 35,1005 55,980 80,930 100,880 125,840 160,810 200,790 250,778 300,765 350,745 395,730'],
            ['ma-down', '395,730 430,750 460,775 490,785'], ['ma-up', '490,785 520,775 560,758 580,750 620,715 660,685 710,655 755,645'],
            ['ma-down', '755,645 775,660 800,700 820,720 850,730 900,770 940,805 965,820 980,822'],
            ['ma-up', '980,822 1030,815 1070,797 1100,770 1130,745 1170,728 1200,726'],
            ['ma-down', '1200,726 1250,733 1280,752 1310,785 1350,825 1385,842'], ['ma-up', '1385,842 1410,843 1440,837 1470,823'],
            ['quote', '622,614 622,660']
        ],
        notes: [[13, 627, 'MAX D28 (154.981)'], [13, 912, 'MIN D28 (153.909)']],
        tags: [[754, '154.545', 'bg-magenta'], [808, '154.338', 'bg-orange'], [821, '154.299', 'bg-blue']],
        atr: ['ATR(10) 0.069', '0.326', '0.056', [8, 1413, 1466, 58], '9,1425 35,1440 50,1445 65,1440 110,1440 125,1450 150,1465 180,1467 205,1455 225,1447 250,1445 280,1455 300,1462 320,1460 365,1467 390,1455 425,1447 450,1450 480,1458 515,1458 535,1442 565,1437 575,1433 585,1437 600,1432 630,1440 660,1447 690,1458 750,1465 760,1445 790,1435 800,1420 815,1420 823,1438 845,1440 865,1452 890,1448 910,1455 945,1467 980,1467 1010,1460 1030,1452 1080,1452 1160,1450 1190,1455 1215,1450 1225,1440 1250,1437 1275,1437 1290,1445 1310,1455 1330,1458 1380,1463 1420,1465 1470,1461']
    },

    euraud: {
        title: 'EURAUD,M15', active: ['candles', 'shift', 'cursor'], shift: 78,
        head: 'EURAUD, M15:  Euro vs Australian Dollar  1.54207 1.54209 1.54164 1.54171',
        view: [11, 105, 1460, 1311], axis: [1.5602, 0.0006, 27, 5, 10, 28],
        info: [['37', '0.64847', '-5.46 EUR', '-0.50 EUR'], ['0.01', '0.548', '15%', '4.11']],
        ticker: '0.0 pips | 0.00 EUR | 37. | 07:08',
        times: '25 Feb 2022|25 Feb 18:45|25 Feb 20:45|25 Feb 22:45|28 Feb 00:45|28 Feb 02:45|28 Feb 04:45|28 Feb 06:45|28 Feb 08:45|28 Feb 10:45|28 Feb 12:45|28 Feb 14:45|28 Feb 16:45|28 Feb 18:45|28 Feb 20:45',
        body: 'w5', start: 12, step: 12.99,
        candles: 'b362,380,500,500 r304,379,405,437 r394,404,558,558 b491,550,559,587 b409,443,551,570 r414,443,455,507 b276,287,455,476 b241,283,288,318 b130,146,283,313 r128,146,199,216 r180,199,216,221 b175,199,215,249 r193,198,238,264 r207,237,250,270 r219,251,273,300 b219,245,273,291 b155,178,245,262 r148,180,244,246 b230,232,247,268 r226,233,248,250 r244,248,370,372 r275,369,371,374 b335,346,372,406 b307,322,346,376 b262,321,324,340 r328,341,357,362 b317,340,356,357 b276,294,340,357 r248,296,299,362 r832,922,971,1018 b816,898,971,1005 b710,762,900,903 b596,738,766,800 b510,543,735,829 r541,543,577,652 b380,456,578,585 r440,455,491,493 b295,410,492,494 b323,383,411,417 b331,360,383,437 r275,360,416,444 r393,412,593,600 r530,594,673,674 b516,524,671,672 b492,511,523,526 r503,512,598,626 b539,570,599,614 b500,526,571,593 b483,526,529,572 r500,526,573,586 r549,575,628,637 b589,612,628,664 r565,611,631,640 r629,630,728,783 r722,726,754,755 b703,735,754,761 r704,735,774,777 r759,771,793,796 b713,731,794,823 b676,678,735,741 r677,679,695,740 r680,696,734,743 r670,733,757,765 r697,755,780,781 b736,742,776,783 r737,740,820,870 b623,663,821,838 r542,664,674,754 r670,674,682,737 r632,682,759,857 r753,759,779,850 b696,738,780,810 b673,696,738,758 r671,699,809,813 r775,809,831,869 b719,729,831,856 r712,726,760,763 b668,745,761,766 b692,700,749,763 r664,699,830,834 b510,542,830,845 r541,542,648,723 r641,646,745,755 r732,745,776,787 r764,777,783,856 r779,780,884,895 b839,846,884,935 r783,845,880,922 r878,878,959,976 b883,896,956,978 r889,896,1038,1040 b884,898,1036,1054 r848,897,916,921 r863,914,1016,1030 b877,900,1015,1058 r870,901,957,972 b897,930,957,987 r838,930,956,958 r949,954,1106,1168 b990,1055,1106,1129 r1028,1056,1130,1228 r1045,1130,1141,1162 b972,1023,1143,1152 r1017,1025,1165,1232 r1148,1165,1277,1312 b1200,1272,1277,1388 b1240,1270,1272,1340 r1257,1271,1354,1372 b1328,1342,1355,1398 r1330,1343,1348,1358 b1303,1307,1347,1370 b1270,1296,1310,1313 r1281,1296,1322,1345',
        lines: [
            ['range', '12,273 1470,273'], ['floor-fat', '12,363 1470,363'], ['target', '12,762 1470,762'],
            ['floor-line', '12,833 376,833 389,1018 1169,1019 1194,1056 1272,1056 1285,1168 1298,1168 1311,1228 1349,1229 1375,1391 1405,1392 1420,1406 1466,1407'],
            ['floor-dash', '389,833 1466,833'],
            ['peak', '389,832 402,818 428,595 441,510 454,510 467,382 480,382 493,295 519,295 532,275 1470,275'],
            ['ma-up', '12,682 60,673 100,648 140,595 190,520 240,450 290,402 330,385 376,370'],
            ['ma-down', '376,370 390,378 420,420 450,460 480,487 500,495'], ['ma-up', '500,495 535,495'],
            ['ma-down', '535,495 600,515 650,535 700,560 760,615 820,668 880,710 960,743 1010,765 1030,770'], ['ma-up', '1030,770 1050,772 1080,771'],
            ['ma-down', '1080,771 1120,778 1160,800 1220,860 1270,895 1320,950 1370,1015 1410,1080 1461,1165']
        ],
        notes: [[16, 263, 'MAX D28 (1.55837)'], [1102, 771, '1017', 'count']],
        tags: [[762, '1.55225', 'bg-magenta']],
        atr: ['ATR(10) 0.00109', '0.00308', '0.00069', [11, 1418, 1460, 60], '12,1442 60,1445 100,1442 120,1445 140,1455 180,1463 215,1467 260,1472 300,1469 375,1471 388,1450 430,1443 445,1434 490,1427 508,1426 518,1444 560,1447 600,1452 640,1460 700,1466 770,1468 845,1473 880,1463 930,1453 985,1447 1030,1453 1055,1446 1100,1450 1150,1450 1200,1460 1230,1455 1270,1456 1300,1448 1350,1447 1400,1444 1440,1453 1466,1461']
    },

    gbpaud: {
        title: 'GBPAUD,M15', active: ['candles', 'shift', 'cursor'], shift: 78,
        head: 'GBPAUD, M15:  Great Britain Pound vs Australian Dollar  1.84695 1.84717 1.84661 1.84704',
        view: [11, 105, 1450, 1311], axis: [1.8625, 0.00065, 26, 5, 15, 29],
        info: [['37', '0.64846', '-3.40 EUR', '-3.60 EUR'], ['0.01', 'N/A', '15%', '4.11']],
        ticker: '0.0 pips | 0.00 EUR | 37. | 07:09',
        times: '25 Feb 2022|25 Feb 18:45|25 Feb 20:45|25 Feb 22:45|28 Feb 00:45|28 Feb 02:45|28 Feb 04:45|28 Feb 06:45|28 Feb 08:45|28 Feb 10:45|28 Feb 12:45|28 Feb 14:45|28 Feb 16:45|28 Feb 18:45|28 Feb 20:45',
        body: 'w5', start: 12, step: 12.89,
        candles: 'b807,815,880,880 b656,694,812,907 r664,695,824,826 b730,801,824,859 b535,559,802,812 r553,560,635,650 b558,623,636,711 b516,545,626,640 r467,545,552,576 r500,552,608,609 b558,565,609,610 b545,554,567,570 r555,556,628,636 b620,625,629,641 r605,626,722,728 b643,691,725,758 b617,620,692,697 r586,622,630,657 b620,622,629,671 r626,626,654,683 r643,652,774,776 b709,762,773,775 b730,735,760,793 r724,735,761,768 b688,742,757,787 r741,742,785,798 b760,781,784,786 b739,779,781,793 r743,780,793,849 r618,678,838,843 b714,812,845,893 b600,622,820,821 b390,556,625,635 b322,413,557,656 r391,412,459,512 b268,299,459,465 b262,282,299,332 b136,277,283,300 b153,220,278,280 r199,223,231,308 r154,229,234,260 r228,232,352,358 r324,352,413,422 b243,255,413,418 r212,255,283,290 r256,281,287,345 r224,283,313,315 b201,217,316,330 b148,170,218,229 b122,160,167,225 r151,159,248,253 r243,248,291,326 r254,287,330,357 r327,329,371,475 r361,370,410,422 b359,387,410,417 r360,387,454,466 b426,444,454,500 b319,338,445,475 b281,286,334,397 r281,286,319,377 r314,316,389,390 r340,389,468,471 b407,454,468,495 b303,313,451,453 r308,312,413,425 r363,409,424,433 r412,422,646,651 b453,600,646,650 r575,600,666,738 b609,636,670,687 b572,592,637,661 b519,556,594,645 b506,541,555,570 b446,507,541,549 r504,507,529,585 b466,514,530,575 r480,514,543,560 b440,456,543,559 r412,456,591,606 b528,547,593,655 r505,543,577,609 r574,580,728,759 b535,542,729,736 r491,542,622,652 b520,606,624,692 r583,606,684,706 r648,684,727,739 r671,726,791,829 b617,624,787,795 r598,625,672,699 r642,672,796,797 b710,738,795,832 r707,738,887,901 b798,842,888,900 r804,843,849,892 r836,849,903,950 b797,849,904,924 r844,849,1045,1060 b825,861,1046,1045 r841,861,1148,1219 r1109,1148,1191,1216 r1075,1188,1238,1240 b1195,1220,1238,1284 r1145,1220,1240,1278 r1224,1239,1256,1315 b1199,1245,1258,1312 b1205,1238,1248,1250 r1229,1237,1369,1370 b1263,1266,1367,1385 b1189,1194,1268,1279 r1190,1194,1242,1260 b1226,1238,1241,1302',
        lines: [
            ['range', '12,121 1460,121'], ['range', '12,1403 1460,1403'], ['floor-fat', '12,429 1460,429'], ['target', '12,762 1460,762'],
            ['peak', '387,619 400,619 413,540 426,385 438,322 451,321 464,262 477,259 490,136 631,136 644,121 1460,121'],
            ['floor', '387,838 400,893 1198,893 1211,902 1237,902 1250,950 1262,952 1275,1139'],
            ['floor-line', '12,1030 1262,1030 1275,1139 1288,1139 1300,1218 1315,1219 1340,1287 1352,1287 1366,1316 1391,1317 1404,1396 1415,1403 1456,1403'],
            ['floor-dash', '1262,1030 1456,1030'], ['ask', '12,1279 1460,1279'], ['bid-thick', '12,1308 1460,1308'],
            ['ma-down', '12,625 30,660 50,700 80,738 115,757 170,763 250,771 320,790 370,818 400,833'],
            ['ma-up', '400,833 415,837 440,828 470,797 490,760 530,690 580,605 630,530 670,465 700,428 750,408 800,390'],
            ['ma-down', '800,390 830,388 870,388 900,405 950,455 1000,485 1060,505 1120,542 1180,595 1240,665 1290,730 1330,810 1370,910 1410,1005 1450,1085']
        ],
        notes: [[16, 111, 'MAX D28 (1.86267)'], [16, 1392, 'MIN D28 (1.84578)'], [1094, 771, '684', 'count']],
        tags: [[762, '1.85425', 'bg-magenta'], [1279, '1.84741', 'bg-orange'], [1308, '1.84704', 'bg-blue']],
        atr: ['ATR(10) 0.00124', '0.00272', '0.00076', [11, 1418, 1450, 60], '137,1438 160,1452 200,1463 260,1470 300,1468 355,1473 400,1463 440,1440 500,1427 535,1433 570,1443 615,1452 690,1462 750,1465 800,1462 860,1459 900,1450 950,1446 1000,1450 1020,1457 1080,1448 1140,1441 1210,1443 1250,1452 1280,1443 1300,1430 1390,1433 1430,1455 1456,1461']
    },

    xauusd15: {
        wide: true, shift: 78.4,
        head: 'XAUUSD, M15:  Gold vs US Dollar (spot)  1904.920 1906.370 1904.920 1905.660',
        view: [4, 1158, 1856, 793], axis: [1972.61, 3.985, 24, 3, 20, 27],
        info: [['490', '0.089', '-133.00 EUR', '-74.47 EUR'], ['0.01', 'N/A', '15%', '4.11']],
        ticker: '0.0 pips | 0.00 EUR | 460 | 07:17',
        times: '23 Feb 2022|23 Feb 12:45|23 Feb 16:45|23 Feb 20:45|24 Feb 01:45|24 Feb 05:45|24 Feb 09:45|24 Feb 13:45|24 Feb 17:45|24 Feb 21:45|25 Feb 02:45|25 Feb 06:45|25 Feb 10:45|25 Feb 14:45|25 Feb 18:45|25 Feb 22:45|28 Feb 03:45|28 Feb 07:45|28 Feb 11:45|28 Feb 15:45|28 Feb 19:45|28 Feb 23:45|1 Mar 04:45',
        body: 'w3', step: 6.466, wick: 42,
        bands: [[1203, 1284], [1364, 1444], [1525, 1605], [1686, 1766], [1846, 1927]],
        // each part of the session has its own origin and scale
        parts: [
            {
                at: [0, 1500, 0.6186, 0.3333],
                walks: [
                    '9:870 20:915 32:925 45:880 55:930 65:975 78:995 85:960 97:945 105:915 117:930 125:915 138:925 150:940 158:910 168:870 176:715 182:805 195:775 204:790 211:740 218:650 224:695 232:630 245:625 258:615 268:590 280:560 292:600 305:590 312:640 320:595 332:610 345:635 352:620 360:690 370:580 382:600 392:625 402:560 415:540 428:545 440:525 450:475 456:545 463:500 472:500 485:465 492:430 500:300 506:225 512:125 525:100',
                    '816:-34 822:320 830:155 835:105 842:210 848:245 855:230 862:280 870:250 877:205 885:230 893:235 900:200 907:205 913:315 919:700 926:1060 933:1140 939:1095 945:1150 951:945 957:910 965:845 971:840 977:730 984:725 990:710 997:645 1003:530 1010:610 1016:645 1023:665 1030:570 1036:580 1042:495 1048:400 1055:540 1061:570 1068:575 1075:570 1080:455 1088:465 1095:485 1100:455 1108:470 1115:475 1125:455 1132:515 1140:500 1145:515 1152:485 1160:465 1166:470 1172:405 1178:435 1185:400 1192:405 1198:340 1204:345 1210:390 1216:440 1223:485 1230:515 1237:510 1243:485 1250:465 1256:520 1262:530 1268:560 1275:540 1282:575 1288:620 1294:590 1300:560 1307:560 1313:720 1320:940 1326:830 1333:755 1340:685 1346:670 1352:905 1359:1030 1365:970 1372:1015 1378:1105 1385:1045 1392:1040 1398:990 1404:1065 1411:1120 1417:1115 1424:1055 1430:1060 1437:1110 1443:1135 1450:1150 1456:1175 1462:1190 1470:1190 1476:1175 1482:1100 1488:1060 1495:1140 1501:1080 1508:1125 1514:1080 1520:1065 1527:1060 1533:1030 1540:1000 1546:975 1553:990 1559:1030 1566:1070'
                ],
                lines: [
                    ['ma-down', '8,857 45,875 80,905 110,928 150,940'], ['ma-up', '165,943 210,900 260,795 300,705 350,645 400,610 460,555 500,505 530,415 570,180 608,0'],
                    ['ma-down', '932,0 960,290 985,465 1010,580 1040,640 1068,652'], ['ma-up', '1085,652 1130,625 1180,595 1210,545 1240,528'],
                    ['ma-down', '1265,528 1310,560 1350,640 1400,810 1440,950 1480,1080 1500,1125 1530,1155'],
                    ['down w3', '822,-34 822,320'], ['down', '822,320 822,480'], ['down', '933,1140 933,1336'], ['down', '945,1150 945,1280'], ['up', '1048,400 1048,282'], ['up', '867,280 867,405'],
                    ['down', '78,990 78,1055'], ['down', '1307,560 1307,465'], ['down', '1411,1120 1411,1218'],
                    ['floor', '8,1102 919,1102 922,1150 926,1200 932,1336 1600,1336']
                ]
            },
            {
                at: [0, 1078, 0.6186, 0.3571],
                walks: ['525:1275 531:1000 537:950 544:1000 550:1130 557:1030 563:1070 570:945 577:945 583:1065 592:975 597:1055 604:970 612:955 620:1060 628:910 640:1000 648:1025 655:920 662:950 668:930 675:850 682:730 690:570 696:380 700:340 706:270 713:340 720:335 726:360 732:540 740:570 745:635 752:500 758:520 765:525 772:455 778:590 785:600 790:645 797:680 803:1090 810:1155 816:1150'],
                lines: [
                    ['ma-up', '540,1500 570,1345 610,1165 650,1040 690,920 725,690 760,550 797,475'],
                    ['ma-down', '797,475 815,510 850,700 890,930 930,1160 935,1180'], ['down', '745,635 745,798'], ['down', '803,1090 803,1180']
                ]
            },
            {
                at: [960, 1600, 0.6186, 0.3597],
                walks: [
                    '-6:610 0:628 6:675 13:710 20:750 26:742 33:740',
                    '39:48 40:160 46:145 53:345 59:240 65:270 72:235 79:135 85:75 92:305 98:240 104:205 111:170 118:220 124:225 131:240 137:255 144:275 150:325 156:310 163:305 170:325 176:270 183:240 190:215 196:220 202:240 209:275 215:270 221:245 227:275 234:265 241:275 247:310 253:450 260:455 266:550 272:510 279:480 286:490 292:465 298:490 305:465 311:470 318:475 324:410 331:385 337:360 343:310 350:280 357:310 363:285 370:340 376:310 382:300 388:270 395:170 401:200 408:235 414:120 421:80 427:150 434:110 440:120 447:235 453:235 460:125 467:280 473:280 479:370 486:460 492:490 498:625 505:630 511:590 518:580 524:480 531:525 537:485 544:495 550:495 556:465 563:400 569:365 576:320 582:320 589:315 595:285 602:240 608:225 615:285 621:280 628:285 634:290 641:300 648:310 654:315 660:300 666:305 673:335 680:330 686:370 692:360 699:390 705:400 711:415 718:410 725:400 731:395 737:390 744:360 750:370 757:350 763:345 770:355 776:335 782:320 789:340 796:350 802:330'
                ],
                lines: [
                    ['ma-up', '35,793 60,725 90,610 120,490 160,370 200,315 245,285'], ['ma-down', '245,285 270,300 300,350 340,382'],
                    ['ma-up', '340,382 390,365 430,300 460,245 480,232'], ['ma-down', '480,232 500,245 520,320 550,380 580,400'],
                    ['ma-up', '580,400 600,395 640,355 690,333'], ['ma-down', '690,333 720,340 760,355 800,353'],
                    ['down', '40,50 40,-225'], ['floor', '40,160 40,260 46,330 53,373 59,373 247,373 253,560 259,618 492,618 500,671 802,671'],
                    ['floor-thick', '635,314 648,316 654,336 666,336 680,350 686,387 705,400 711,433 802,433'],
                    ['peak-thick', '635,267 802,267'], ['floor-dash', '0,960 802,960']
                ]
            }
        ],
        lines: [
            ['peak-thick', '4,1654 289,1654 297,1653 301,1645 305,1645 310,1560 316,1517 325,1516 332,1372 416,1372 427,1179 433,1178 437,1170 1345,1170'],
            ['peak-fat', '1350,1170 1458,1170'], ['range-fat', '4,1519 1860,1519'], ['range-fat', '4,1841 1860,1841'], ['peak', '985,1519 1456,1519'],
            ['ask-red', '4,1717 1860,1717'], ['bid-thick', '4,1720 1860,1720'], ['target', '4,1749 1860,1749'], ['peak-dash', '4,1747 976,1747'],
            ['white-dash', '1607,1284 1860,1284'], ['white-dash', '1607,1445 1860,1445'], ['white-dash', '1607,1606 1860,1606'],
            ['white-line', '1607,1766 1860,1766'], ['white-dash', '1607,1927 1860,1927']
        ],
        grid: [
            ['gold', 1518, 1497, [[1203, '1970.000'], [1284, '1960.000'], [1364, '1950.000'], [1444, '1940.000'], [1525, '1930.000'], [1605, '1920.000'], [1686, '1910.000'], [1766, '1900.000'], [1846, '1890.000'], [1927, '1880.000']]],
            ['blue', 1512, 1512, [[1163, '1975.000'], [1243, '1965.000'], [1324, '1955.000'], [1404, '1945.000'], [1485, '1935.000'], [1565, '1925.000'], [1645, '1915.000'], [1726, '1905.000'], [1806, '1895.000'], [1887, '1885.000']]]
        ],
        notes: [[5, 1279, '1960.000'], [5, 1439, '1940.000'], [5, 1600, '1920.000'], [5, 1760, '1900.000'], [5, 1922, '1880.000'], [9, 1511, 'MAX D28 (1930.670)'], [9, 1833, 'MIN D28 (1890.670)'], [10, 1940, 'Grid = 10000  Points', 'dim'], [852, 1756, '3558', 'count']],
        tags: [[1716, '1906.110', 'bg-red'], [1721, '1905.660', 'bg-blue'], [1749, '1902.102', 'bg-magenta']],
        atr: ['ATR(10) 1.381', '11.364', '0.432', [7, 160, 3000, 108], '8,256 35,255 60,247 110,247 140,256 170,256 195,245 230,236 250,244 275,245 300,253 350,255 370,250 430,254 460,249 490,250 510,236 525,235 535,214 560,199 588,201 600,216 620,224 660,230 690,214 720,209 748,203 765,211 795,206 805,193 815,193 825,176 850,169 865,180 885,217 905,232 920,210 935,188 950,172 975,172 995,218 1020,226 1040,232 1055,217 1075,225 1105,226 1120,241 1160,251 1200,248 1250,236 1310,244 1325,224 1350,218 1372,203 1390,212 1410,209 1450,224 1480,243 1568,252 1585,255 1592,211 1607,192 1632,184 1649,168 1657,209 1670,225 1687,229 1712,244 1797,247 1812,233 1862,229 1892,246 1937,242 1992,225 2007,215 2042,214 2050,208 2072,222 2122,244 2202,256 2352,259']
    },

    xauusd1: {
        title: 'XAUUSD,M1', wide: true, active: ['line', 'scroll', 'shift', 'cursor'], shift: 78,
        head: 'XAUUSD, M1:  Gold vs US Dollar (spot)  1906.170 1906.210 1905.620 1905.660',
        expert: 'Auto SLTP Maker MT5',
        view: [23, 107, 1451, 1307], axis: [1931.53, 1.985, 28, 3, 3, 27],
        info: [['490', '0.089', '-133.00 EUR', '-74.47 EUR'], ['0.03', 'N/A', '15%', '4.11']],
        ticker: '0.0 pips | 0.00 EUR | 490 | 00:08',
        times: '1 Mar 2022|1 Mar 04:59|1 Mar 05:15|1 Mar 05:31|1 Mar 05:47|1 Mar 06:03|1 Mar 06:19|1 Mar 06:35|1 Mar 06:51|1 Mar 07:07|1 Mar 07:23',
        bands: [[153, 386], [620, 853], [1085, 1319]],
        lines: [
            ['range', '23,137 1474,137'], ['peak', '23,138 1152,138'], ['white-line', '23,422 1152,422'],
            ['peak-thick', '23,651 1153,651'], ['range', '1153,651 1474,651'],
            ['ask-red', '23,709 1474,709'], ['bid-thick', '23,720 1474,720'], ['target', '23,762 1474,762'],
            ['floor-line', '23,823 1153,823'], ['range', '1153,823 1474,823'],
            ['floor', '23,1070 1153,1070'], ['range', '23,1069 1474,1069'], ['floor-dash', '23,1372 1145,1372'],
            ['ma-down', '23,740 240,747 400,749 500,750'], ['ma-up', '500,750 700,748 850,745 1000,742 1100,743'],
            ['ma-up', '23,803 200,795 320,785 500,765 650,747 820,728 900,723'], ['ma-down', '900,724 1000,724 1100,725'],
            ['quote', '23,769 45,775 60,778 75,788 90,792 110,778 130,787 140,785 150,762 165,758 180,763 200,765 215,770 232,780 250,772 265,770 278,776 290,750 305,742 318,748 335,738 348,727 360,742 372,757 400,758 418,764 430,753 450,748 470,750 490,742 510,730 522,722 535,728 550,731 570,731 590,723 640,728 648,747 665,746 690,733 705,729 718,733 728,727 740,733 755,718 768,716 780,710 795,711 810,706 830,710 850,713 865,720 880,725 900,728 920,735 935,732 950,739 970,745 990,740 1000,728 1020,730 1040,723 1060,733 1080,728 1100,739 1108,710 1117,720 1127,732 1137,712 1144,708 1153,721']
        ],
        grid: [
            ['gold big', 1295, 1250, [[153, '1930.000'], [386, '1920.000'], [620, '1910.000'], [853, '1900.000'], [1085, '1890.000'], [1319, '1880.000']]],
            ['blue', 1243, 1243, [[271, '1925.000'], [503, '1915.000'], [737, '1905.000'], [969, '1895.000'], [1203, '1885.000']]],
            ['pink', 1182, 1182, [[213, '1927.500'], [328, '1922.500'], [445, '1917.500'], [562, '1912.500'], [679, '1907.500'], [795, '1902.500'], [912, '1897.500'], [1028, '1892.500'], [1145, '1887.500'], [1261, '1882.500'], [1378, '1877.500']]]
        ],
        notes: [[27, 126, 'MAX D28 (1930.670)'], [27, 640, 'MAX D01 (1908.670)'], [27, 812, 'MIN D01 (1901.270)'], [27, 1059, 'MIN D28 (1890.670)'], [32, 1397, 'Grid = 10000  Points', 'dim']],
        tags: [[709, '1906.150', 'bg-red'], [721, '1905.660', 'bg-blue'], [762, '1903.925', 'bg-magenta']],
        atr: ['ATR(10) 0.547', '0.583', '0.166', [23, 1416, 1451, 59], '23,1453 60,1456 80,1459 125,1458 140,1451 150,1437 170,1431 200,1434 220,1456 240,1462 275,1461 285,1448 320,1443 360,1440 400,1442 425,1458 445,1465 500,1469 560,1457 600,1463 640,1461 645,1452 700,1455 710,1466 770,1457 810,1468 870,1455 910,1462 955,1454 970,1463 1010,1468 1050,1464 1100,1459 1120,1443 1135,1428 1152,1423']
    },

    xauusd15b: {
        title: 'XAUUSD,M15', wide: true, active: ['candles', 'shift', 'cursor'], shift: 78,
        head: 'XAUUSD, M15:  Gold vs US Dollar (spot)  1904.920 1906.370 1904.920 1905.660',
        view: [18, 107, 1452, 1307], axis: [1934.36, 1.975, 28, 3, 4, 27],
        info: [['490', '0.089', '-133.00 EUR', '-74.47 EUR'], ['0.05', 'N/A', '15%', '4.11']],
        ticker: '0.0 pips | 0.00 EUR | 490 | 07:08',
        times: '25 Feb 2022|25 Feb 22:00|28 Feb 01:00|28 Feb 03:00|28 Feb 05:00|28 Feb 07:00|28 Feb 09:00|28 Feb 11:00|28 Feb 13:00|28 Feb 15:00|28 Feb 17:00|28 Feb 19:00|28 Feb 21:00|28 Feb 23:00',
        body: 'w5', start: 18, step: 13,
        candles: 'b1180,1182,1222,1224 r1174,1181,1258,1261 b1191,1198,1255,1259 r1195,1198,1243,1244 b1188,1197,1242,1243 b1165,1178,1200,1215 r1150,1176,1180,1190 b1140,1148,1180,1181 b1095,1113,1150,1151 b1094,1099,1116,1118 r1097,1099,1115,1117 r1105,1115,1148,1174 r1145,1149,1187,1188 r1186,1188,1227,1237 b1210,1219,1227,1233 b1186,1211,1218,1219 r206,491,609,715 b550,595,604,606 r583,593,803,808 b689,690,803,832 r660,691,724,740 b654,686,725,726 b558,584,688,690 b476,521,585,588 r519,521,735,786 b653,680,735,759 b639,654,680,682 b594,617,654,655 r612,618,672,684 r621,673,675,706 r654,675,692,706 r664,691,706,737 r680,706,732,743 r695,730,783,784 b757,767,784,822 b749,763,766,788 r756,764,780,784 b686,714,779,783 r673,709,720,740 b655,667,720,722 r650,667,673,686 r658,671,706,719 r698,706,720,745 r707,720,738,757 b695,696,739,740 r691,696,728,738 b719,721,723,758 r709,721,728,741 r722,729,769,770 r766,768,914,1017 r910,912,925,1087 r914,923,1015,1016 b957,978,1015,1050 b941,943,979,1025 r881,943,953,955 b905,918,953,960 r880,918,944,959 b917,926,944,963 b892,918,926,936 r904,917,936,962 b866,868,937,956 b844,854,867,880 b806,810,855,865 b716,777,810,840 b752,758,779,838 r744,757,788,798 b732,738,786,796 r716,738,794,795 b781,792,794,828 b730,760,792,828 b685,726,760,775 b599,618,726,742 r583,618,678,695 r646,678,681,710 b557,571,683,684 b500,525,573,576 r523,524,600,625 b546,556,601,622 r535,556,570,655 r523,570,683,684 b582,586,683,757 b531,570,588,610 r554,571,735,759 b732,733,736,806 r725,733,836,859 r792,836,915,938 r866,913,959,979 r935,958,1097,1140 b1060,1097,1100,1144 b1026,1058,1103,1128 b1016,1048,1058,1100 b945,946,1052,1056 r944,946,992,998 b935,948,993,994 r917,947,960,971 b952,956,959,985 b900,925,956,976 b837,855,925,935 b817,822,857,862 b774,776,824,856 r768,777,794,809 b768,772,794,819 b710,735,771,773 b690,692,735,742 b671,675,695,707 r674,675,735,736 b730,733,735,741 r730,734,738,770 b721,738,770,772 r734,741,754,766 r750,751,768,772 r765,766,794,795',
        lines: [
            ['range', '19,207 1470,207'], ['peak', '226,206 1462,206'], ['range', '19,1142 1470,1142'],
            ['target', '19,760 1470,760'], ['ask-red', '19,780 1470,780'], ['bid', '19,792 1470,792'], ['peak-dash', '19,870 200,870'],
            ['floor', '226,715 239,800 252,820 265,832 642,832 655,1017 668,1087 1136,1087 1149,1138 1160,1142 1462,1142'],
            ['peak-thick', '1422,720 1461,720'], ['floor-line', '1422,770 1445,772 1461,793'],
            ['ma-down', '25,1222 60,1245 110,1270 135,1272'], ['ma-up', '135,1272 170,1269'], ['ma-down', '170,1269 213,1272'],
            ['ma-up', '213,1272 230,1258 250,1225 290,1150 340,1045 400,920 450,855 500,820 550,780 600,752 640,741'],
            ['ma-down', '640,741 655,738 690,750 740,790 780,820 830,840'], ['ma-up', '830,840 850,841 910,828 960,800 1000,765 1050,715 1090,690'],
            ['ma-down', '1090,690 1115,683 1140,695 1180,755 1220,805 1260,840 1300,857'], ['ma-up', '1300,857 1320,859 1360,850 1400,825 1461,803']
        ],
        notes: [[23, 196, 'MAX D28 (1930.670)'], [23, 1131, 'MIN D28 (1890.670)'], [890, 769, '350', 'count']],
        tags: [[760, '1907.000', 'bg-magenta'], [780, '1906.150', 'bg-red'], [792, '1905.660', 'bg-blue']],
        atr: ['ATR(10) 1.381', '11.320', '0.889', [18, 1416, 1452, 59], '19,1466 120,1466 135,1469 213,1470 226,1447 260,1437 320,1431 330,1425 343,1423 356,1444 385,1455 430,1458 460,1466 570,1466 640,1468 668,1459 740,1458 770,1458 790,1466 850,1465 950,1461 1020,1455 1060,1447 1120,1447 1148,1444 1200,1453 1260,1461 1350,1467 1461,1470']
    }
};
```
FILE: app.js
```js
const icon = id => `<svg><use href="#${id}"/></svg>`;

// "+" marks a drop-down, "|" is a separator, "#" a period button
const tools = ['bars', 'candles', 'line', '|', 'zoomin', 'zoomout', '|', 'scroll', 'shift', '|', 'ind+', 'clock+', '|', 'camera', '|',
    'cursor', 'cross', '|', 'vline', 'hline', 'trend', 'channel', 'fib', 'T', 'chart+', 'shapes+'];
const mainTools = ['bag', 'signal', 'axes+', 'panel+', '$', 'swap', '|', 'ind+', 'gear', 'folder', 'play:Algo Trading', 'order:New Order', '|',
    'refresh', 'bars', 'candles', 'line', '|', 'zoomin', 'zoomout', 'grid', '|', 'scroll', 'shift', '|', 'chart+', 'camera', '|',
    'cursor', 'cross', '|', 'vline', 'hline', 'arrow', 'trend', 'tri', 'rect', 'ellipse', 'fib', 'T', 'shapes+', '|',
    '#M1', '#M5', '#M15', '#H1', '#H3', '#H4', '#D1', '#W1', '#MN', '|'];

function toolbar(list, active) {
    return list.map(t => {
        if (t === '|') return '<i class="sep"></i>';
        if (t === 'T') return '<button class="tool" aria-label="Text"><span class="letter">T</span></button>';
        if (t === '$') return '<button class="tool" aria-label="Market"><span class="coin">$</span></button>';
        if (t[0] === '#') return `<button class="tool period${active.includes(t) ? ' active' : ''}">${t.slice(1)}</button>`;
        const [name, label] = t.replace('+', '').split(':');
        const cls = (t.endsWith('+') ? ' drop' : '') + (label ? ' text' : '') + (active.includes(name) ? ' active' : '');
        return `<button class="tool${cls}" aria-label="${label || name}">${icon('i-' + name)}${label || ''}</button>`;
    }).join('');
}

const polyline = ([cls, pts]) => `<polyline class="${cls}" points="${pts}"/>`;

// builds wick and body paths for one colour each
function candlePaths(list, body) {
    const d = { b: ['', ''], r: ['', ''] };
    list.forEach(([color, x, high, top, bottom, low]) => {
        d[color][0] += `M${x} ${high}V${low}`;
        d[color][1] += `M${x} ${top}V${Math.max(bottom, top + 2)}`;
    });
    return `<g class="crisp"><path class="up" d="${d.b[0]}"/><path class="down" d="${d.r[0]}"/>` +
        `<path class="up ${body}" d="${d.b[1]}"/><path class="down ${body}" d="${d.r[1]}"/></g>`;
}

function parseCandles(c) {
    return c.candles.split(' ').map((s, i) => [s[0], Math.round(c.start + i * c.step), ...s.slice(1).split(',').map(Number)]);
}

function walkCandles(text, step, wick) {
    const pts = text.split(' ').map(p => p.split(':').map(Number));
    const out = [];
    let prev = pts[0][1];
    let k = 0;
    for (let x = pts[0][0], i = 1; x <= pts[pts.length - 1][0]; x += step, i++) {
        while (k < pts.length - 2 && pts[k + 1][0] < x) k++;
        const [x0, y0] = pts[k];
        const [x1, y1] = pts[k + 1];
        const wave = Math.abs(Math.sin(i * 12.9898) * 43.758) % 1;
        const wave2 = Math.abs(Math.sin(i * 78.233) * 91.17) % 1;
        const y = y0 + (y1 - y0) * (x - x0) / (x1 - x0) + (wave - 0.5) * wick * 0.5;
        out.push([y < prev ? 'b' : 'r', x, Math.min(y, prev) - wave * wick, Math.min(y, prev), Math.max(y, prev), Math.max(y, prev) + wave2 * wick]);
        prev = y;
    }
    return out;
}

function drawChart(node, c) {
    const [vx, vy, vw, vh] = c.view;
    const px = x => ((x - vx) / vw * 100).toFixed(2);
    const py = y => ((y - vy) / vh * 100).toFixed(2);
    let art = (c.bands || []).map(([a, b]) => `<rect class="band" x="${vx}" y="${a}" width="${vw}" height="${b - a}"/>`).join('');
    let labels = '';

    (c.grid || []).forEach(([kind, box, end, rows]) => {
        const cls = { gold: 'gold-line', 'gold big': 'gold-mid', blue: 'dodger', pink: 'pink-line' }[kind];
        rows.forEach(([y, text]) => {
            art += polyline([cls + ' crisp', `${vx},${y} ${end},${y}`]);
            if (end < box) art += polyline(['gold-thin crisp', `${end},${y} ${box},${y}`]);
            labels += `<span class="tag ${kind}" style="left:${px(box)}%;top:${py(y)}%">${text}</span>`;
        });
    });
    if (c.candles) art += candlePaths(parseCandles(c), c.body);
    (c.walks || []).forEach(w => art += candlePaths(walkCandles(w, c.step, c.wick), c.body));
    (c.parts || []).forEach(p => {
        const [ox, oy, sx, sy] = p.at;
        art += `<g transform="translate(${ox} ${oy}) scale(${sx} ${sy})">` +
            p.walks.map(w => candlePaths(walkCandles(w, c.step, c.wick), c.body)).join('') + p.lines.map(polyline).join('') + '</g>';
    });
    art += c.lines.map(polyline).join('');

    (c.notes || []).forEach(([x, y, text, cls]) => {
        labels += `<span class="note ${cls || ''}" style="left:${px(x)}%;top:${py(y)}%">${text}</span>`;
    });

    const [first, step, count, digits, padTop, padBottom] = c.axis;
    let prices = '';
    for (let i = 0; i < count; i++) prices += `<span>${(first - i * step).toFixed(digits)}</span>`;
    prices += c.tags.map(([y, text, cls]) => `<div class="price-tag ${cls}" style="top:${py(y)}%">${text}</div>`).join('');

    const group = (rows, cls) => `<div class="${cls}"><b>${rows[0]}</b>${rows.slice(1).map(r => `<span>${r}</span>`).join('')}</div>`;
    const [atrName, atrHigh, atrLow, atrView, atrPts] = c.atr;

    node.innerHTML = `
        <div class="plot">
            <svg viewBox="${c.view.join(' ')}" preserveAspectRatio="none">${art}</svg>
            ${labels}
            <i class="shift-mark" style="left:${c.shift}%"></i>
            <div class="chart-head">${icon('h-list')}${icon('h-tags')}<span>${c.head}</span></div>
            ${c.expert ? `<div class="expert">${c.expert}${icon('h-hat')}</div>` : ''}
            <div class="info">
                ${group(c.info[0], 'spread')}${group(c.info[1], 'lots')}${group(['0.00', '0.00'], 'profit')}${group(['0.00', '0.00'], 'profit')}
                <button class="ruler">SHOW RULER</button>
            </div>
            <div class="ticker">${c.ticker}</div>
        </div>
        <div class="price-axis" style="padding:${padTop}px 0 ${padBottom}px">${prices}</div>
        <div class="atr"><svg viewBox="${atrView.join(' ')}" preserveAspectRatio="none">${polyline(['dodger', atrPts])}</svg><span>${atrName}</span></div>
        <div class="atr-axis"><span>${atrHigh}</span><span>${atrLow}</span></div>
        <div class="time-axis">${c.times.split('|').map(t => `<span>${t}</span>`).join('')}</div>`;
    if (c.wide) node.classList.add('wide');
}

document.querySelectorAll('.window').forEach(win => {
    const c = charts[win.dataset.chart];
    win.innerHTML = `
        <header class="titlebar">
            <svg class="app-icon"><use href="#i-candles"/></svg><h2>${c.title}</h2>
            <div class="win-buttons">
                <button aria-label="Minimize">${icon('s-min')}</button><button aria-label="Maximize">${icon('s-max')}</button><button aria-label="Close">${icon('s-close')}</button>
            </div>
        </header>
        <div class="toolbar">${toolbar(tools, c.active)}</div>
        <div class="chart"></div>`;
    drawChart(win.querySelector('.chart'), c);
});

drawChart(document.querySelector('[data-plot]'), charts.xauusd15);

document.getElementById('main-tools').innerHTML = toolbar(mainTools, ['play', 'candles', 'shift', 'cursor', '#M15']) +
    `<button class="tool push" aria-label="Search">${icon('i-search')}</button><button class="tool" aria-label="Account">${icon('i-user')}</button>
    <button class="tool lvl">${icon('i-lvl')}LVL</button><span class="battery"></span>`;

const apps = ['win', 'search', 'ring', 'view', 'edge', 'folder', 'mail', 'phone', 'office', 'c', 'tv', 'chrome', 'robo'];
document.querySelectorAll('.taskbar').forEach(bar => {
    const nav = document.createElement('nav');
    nav.innerHTML = apps.map((a, i) => {
        const cls = (i < 4 ? ' thin' : '') + (i > 9 ? ' open' : '') + (a === 'robo' ? ' current' : '');
        const badge = a === 'mail' ? '<span class="badge">3</span>' : '';
        return `<button class="task${cls}" aria-label="${a}">${icon(a === 'robo' ? 'i-robo' : 't-' + a)}${badge}</button>`;
    }).join('');
    bar.prepend(nav);
});
```
